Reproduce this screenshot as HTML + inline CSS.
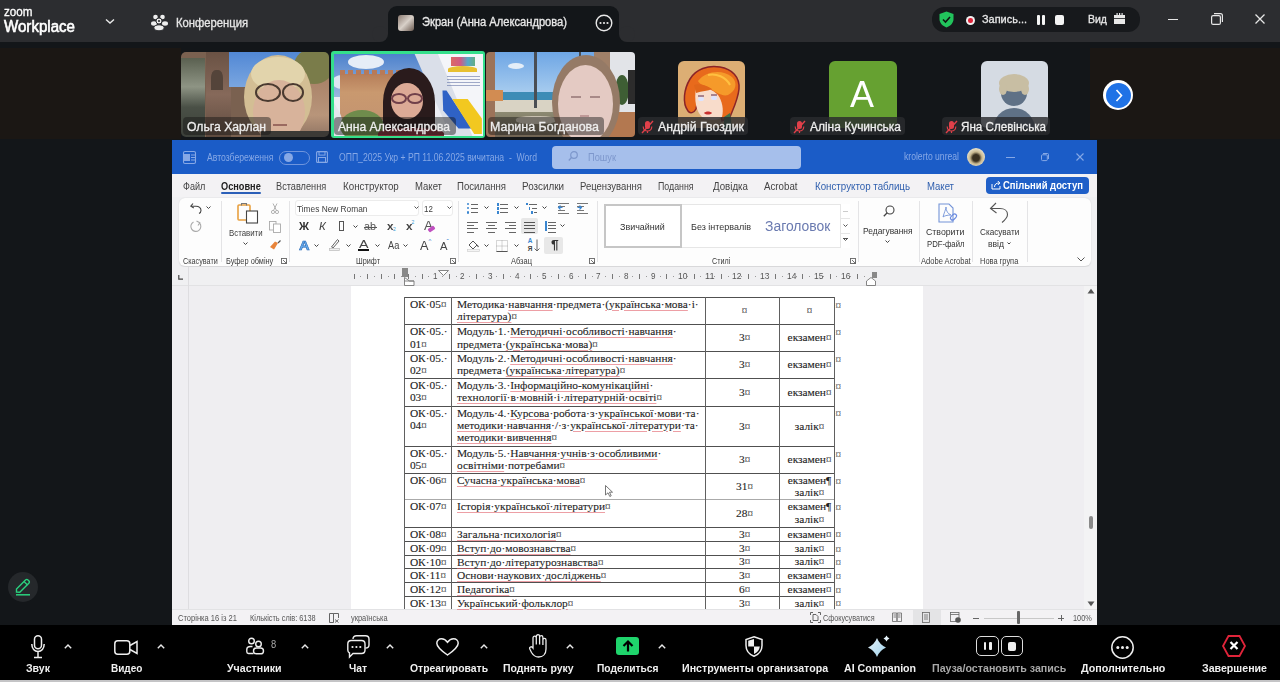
<!DOCTYPE html>
<html><head><meta charset="utf-8">
<style>
*{margin:0;padding:0;box-sizing:border-box}
html,body{width:1280px;height:682px;overflow:hidden;background:#131619;font-family:"Liberation Sans",sans-serif;position:relative}
.a{position:absolute}
.t{position:absolute;white-space:nowrap;line-height:1;transform-origin:0 0}
svg{position:absolute;overflow:visible}
u{text-decoration:underline;text-decoration-color:rgba(225,95,105,.6);text-underline-offset:1.8px;text-decoration-thickness:1px}
.cm{font-size:0.95em}
</style></head><body>
<!-- TOP BAR -->
<div class="a" style="left:0;top:0;width:1280px;height:42px;background:#2c2d30"></div>
<div class="t" style="left:4px;top:5.9px;font-size:12.5px;color:#fff;-webkit-text-stroke:0.3px #fff;transform:scaleX(0.9320)">zoom</div>
<div class="t" style="left:4px;top:18.5px;font-size:15.8px;color:#fff;-webkit-text-stroke:0.6px #fff;transform:scaleX(0.9550)">Workplace</div>
<svg style="left:105px;top:18px" width="10" height="7" viewBox="0 0 10 7"><path d="M1 1.5 L5 5 L9 1.5" stroke="#e8e8e8" stroke-width="1.4" fill="none"/></svg>
<svg style="left:151px;top:14px" width="17" height="17" viewBox="0 0 17 17"><circle cx="4.5" cy="3" r="2.3" fill="#eee"/><circle cx="11.5" cy="3" r="2.3" fill="#eee"/><ellipse cx="3" cy="9.5" rx="3" ry="2.2" fill="#eee"/><ellipse cx="14" cy="9.5" rx="3" ry="2.2" fill="#eee"/><circle cx="8" cy="7" r="3" fill="#eee" stroke="#2c2d30" stroke-width="1"/><circle cx="8" cy="7" r="1.1" fill="#2c2d30"/><ellipse cx="8" cy="13.8" rx="5.2" ry="3" fill="#eee" stroke="#2c2d30" stroke-width="1"/></svg>
<div class="t" style="left:176px;top:16px;font-size:13px;color:#e6e6e6;-webkit-text-stroke:0.35px #e6e6e6;transform:scaleX(0.8644)">Конференция</div>
<!-- share tab -->
<div class="a" style="left:388px;top:6px;width:231px;height:36px;background:#131619;border-radius:9px 9px 0 0"></div>
<div class="a" style="left:380px;top:34px;width:8px;height:8px;background:#131619"></div>
<div class="a" style="left:372px;top:26px;width:16px;height:16px;border-radius:50%;background:#2c2d30"></div>
<div class="a" style="left:619px;top:34px;width:8px;height:8px;background:#131619"></div>
<div class="a" style="left:619px;top:26px;width:16px;height:16px;border-radius:50%;background:#2c2d30"></div>
<div class="a" style="left:398px;top:15px;width:16px;height:16px;border-radius:3px;background:linear-gradient(135deg,#8a7a70,#d8d0c8 50%,#6a5a50)"></div>
<div class="t" style="left:422px;top:16px;font-size:12.5px;color:#e8e8e8;-webkit-text-stroke:0.35px #e8e8e8;transform:scaleX(0.8919)">Экран (Анна Александрова)</div>
<svg style="left:595px;top:14px" width="18" height="18" viewBox="0 0 18 18"><circle cx="9" cy="9" r="7.8" stroke="#e8e8e8" stroke-width="1.4" fill="none"/><circle cx="5.5" cy="9" r="1.1" fill="#e8e8e8"/><circle cx="9" cy="9" r="1.1" fill="#e8e8e8"/><circle cx="12.5" cy="9" r="1.1" fill="#e8e8e8"/></svg>
<!-- right pill -->
<div class="a" style="left:932px;top:7px;width:208px;height:25px;background:#17191c;border-radius:12px"></div>
<svg style="left:938px;top:11px" width="17" height="17" viewBox="0 0 17 17"><path d="M8.5 0.5 L15.5 3 V8 C15.5 12 12.5 15 8.5 16.5 C4.5 15 1.5 12 1.5 8 V3 Z" fill="#22c35c"/><path d="M5 8.5 L7.5 11 L12 6" stroke="#111" stroke-width="1.6" fill="none"/></svg>
<div class="a" style="left:965.5px;top:15.5px;width:9px;height:9px;border-radius:50%;background:#f2f2f2"></div>
<div class="a" style="left:968px;top:18px;width:4.5px;height:4.5px;border-radius:50%;background:#e0243a"></div>
<div class="t" style="left:982px;top:14px;font-size:11.5px;color:#e8e8e8;-webkit-text-stroke:0.3px #e8e8e8;transform:scaleX(0.9508)">Запись...</div>
<div class="a" style="left:1036.5px;top:15px;width:3px;height:10px;background:#f4f4f4;border-radius:1px"></div>
<div class="a" style="left:1041.5px;top:15px;width:3px;height:10px;background:#f4f4f4;border-radius:1px"></div>
<div class="a" style="left:1055px;top:15px;width:9px;height:9.5px;background:#f4f4f4;border-radius:2px"></div>
<div class="t" style="left:1088px;top:14px;font-size:11.5px;color:#e8e8e8;-webkit-text-stroke:0.3px #e8e8e8;transform:scaleX(0.9129)">Вид</div>
<svg style="left:1114px;top:13px" width="11" height="11" viewBox="0 0 11 11"><rect x="0" y="2" width="11" height="9" fill="#e8e8e8"/><rect x="2.5" y="0" width="1.2" height="2" fill="#e8e8e8"/><rect x="5" y="0" width="1.2" height="2" fill="#e8e8e8"/><rect x="7.5" y="0" width="1.2" height="2" fill="#e8e8e8"/><rect x="0" y="5" width="11" height="0.8" fill="#17191c"/></svg>
<div class="a" style="left:1168px;top:19px;width:10px;height:1.2px;background:#e6e6e6"></div>
<svg style="left:1211px;top:13px" width="12" height="12" viewBox="0 0 12 12"><rect x="0.6" y="2.6" width="8.8" height="8.8" rx="1.5" stroke="#e6e6e6" stroke-width="1.2" fill="none"/><path d="M3 0.6 H9.5 A1.9 1.9 0 0 1 11.4 2.5 V9" stroke="#e6e6e6" stroke-width="1.2" fill="none"/></svg>
<svg style="left:1255px;top:14px" width="10" height="10" viewBox="0 0 10 10"><path d="M0.5 0.5 L9.5 9.5 M9.5 0.5 L0.5 9.5" stroke="#e6e6e6" stroke-width="1.3"/></svg>

<!-- STRIP -->
<div class="a" style="left:0;top:48px;width:181px;height:91px;background:#1b1714"></div>
<div class="a" style="left:1090px;top:48px;width:190px;height:91px;background:#1b1714"></div>

<div class="a" style="left:181px;top:52px;width:148px;height:85px;overflow:hidden;border-radius:5px;"><div class="a" style="left:0;top:0;width:148px;height:85px;filter:blur(0.6px)"><div class="a" style="left:-2px;top:-2px;width:152px;height:90px;background:#7a6150;"></div><div class="a" style="left:25px;top:0px;width:25px;height:85px;background:linear-gradient(180deg,#6a5244,#86695a 50%,#5e4a3e);"></div><div class="a" style="left:30px;top:18px;width:12px;height:20px;background:#54443a;border-radius:40% 40% 0 0;"></div><div class="a" style="left:-2px;top:6px;width:26px;height:82px;background:linear-gradient(180deg,#5a6050,#8e9484 35%,#4a5046 60%,#3a3e38);"></div><div class="a" style="left:48px;top:-2px;width:78px;height:37px;background:linear-gradient(180deg,#4f86d4,#7aa6e0);"></div><div class="a" style="left:104px;top:26px;width:46px;height:62px;background:linear-gradient(180deg,#a98268,#b8957a 60%,#8a7060);"></div><div class="a" style="left:120px;top:38px;width:10px;height:12px;background:#7a6a60;"></div><div class="a" style="left:113px;top:-4px;width:40px;height:36px;background:#7a7c4a;border-radius:50%;"></div><div class="a" style="left:63px;top:3px;width:68px;height:84px;background:#d3be94;border-radius:50%;"></div><div class="a" style="left:70px;top:5px;width:54px;height:34px;background:#e2d4ac;border-radius:50%;"></div><div class="a" style="left:72px;top:28px;width:52px;height:64px;background:#d8b39b;border-radius:50%;"></div><div class="a" style="left:74px;top:30.5px;width:26px;height:19.0px;background:transparent;border-radius:50%;border:2.8px solid #4a3a30;"></div><div class="a" style="left:101px;top:30.5px;width:22px;height:19.0px;background:transparent;border-radius:50%;border:2.8px solid #4a3a30;"></div><div class="a" style="left:92px;top:72px;width:14px;height:2px;background:#9a6a60;"></div><div class="a" style="left:80px;top:79px;width:70px;height:8px;background:#3c3a36;"></div></div></div>
<div class="a" style="left:331px;top:51px;width:154px;height:87px;background:#34df8b;border-radius:3px;"></div>
<div class="a" style="left:333.5px;top:53.5px;width:149px;height:82px;overflow:hidden;"><div class="a" style="left:0;top:0;width:149px;height:82px;filter:blur(0.5px)"><div class="a" style="left:-2px;top:-2px;width:153px;height:88px;background:#eceef4;"></div><div class="a" style="left:-2px;top:-2px;width:95px;height:45px;background:linear-gradient(180deg,#4a7fcc,#9bb8de);"></div><div class="a" style="left:14px;top:1px;width:36px;height:14px;background:#e6edf7;border-radius:50%;"></div><div class="a" style="left:-2px;top:21px;width:20px;height:14px;background:#dfe6f2;border-radius:50%;"></div><div class="a" style="left:6px;top:20px;width:72px;height:46px;background:linear-gradient(180deg,#b67e5a,#c9996f 40%,#c49470);"></div><div class="a" style="left:6px;top:16px;width:72px;height:5px;background:repeating-linear-gradient(90deg,#b87a58 0 5px,transparent 5px 8px);"></div><div class="a" style="left:-2px;top:45px;width:20px;height:45px;background:#e4e6ee;clip-path:polygon(0 0,40% 30%,100% 100%,0 100%);"></div><div class="a" style="left:6px;top:56px;width:44px;height:32px;background:#6f8c4c;border-radius:50%;"></div><div class="a" style="left:80px;top:-2px;width:72px;height:90px;background:#dadfe9;clip-path:polygon(0 0,100% 0,100% 100%,55% 100%);"></div><div class="a" style="left:98px;top:-2px;width:54px;height:90px;background:#f4f5f9;clip-path:polygon(10% 0,100% 0,100% 100%,80% 100%);"></div><div class="a" style="left:100px;top:30px;width:52px;height:55px;background:#2f62c6;clip-path:polygon(9px 7px,13px 7px,38px 45px,25px 45px,9.7px 27px);"></div><div class="a" style="left:100px;top:30px;width:52px;height:55px;background:#f2c820;clip-path:polygon(18.8px 15.5px,34.2px 15.5px,48.4px 34.9px,48.4px 50.4px,40.7px 50.4px);"></div><div class="a" style="left:117px;top:3px;width:24px;height:9px;background:linear-gradient(90deg,#d8504a,#c84070 40%,#3a9ac0 70%,#4aa070);opacity:.85;"></div><div class="a" style="left:114px;top:12px;width:29px;height:6px;background:#e8c030;border-radius:50% 50% 0 0;"></div><div class="a" style="left:113px;top:22px;width:33px;height:12px;background:repeating-linear-gradient(180deg,#5a6aa0 0 1px,transparent 1px 3px);opacity:.55;"></div><div class="a" style="left:49px;top:14px;width:52px;height:68px;background:#2a1b1c;border-radius:50%;"></div><div class="a" style="left:49px;top:48px;width:52px;height:40px;background:#2a1b1c;"></div><div class="a" style="left:57px;top:29px;width:32px;height:36px;background:#dcaa96;border-radius:50%;"></div><div class="a" style="left:57px;top:39.5px;width:16px;height:11.0px;background:transparent;border-radius:50%;border:2px solid #70404a;"></div><div class="a" style="left:73px;top:39.5px;width:16px;height:11.0px;background:transparent;border-radius:50%;border:2px solid #70404a;"></div><div class="a" style="left:44px;top:74px;width:66px;height:14px;background:#7a2a34;border-radius:40% 40% 0 0;"></div></div></div>
<div class="a" style="left:486px;top:52px;width:149px;height:85px;overflow:hidden;border-radius:4px;"><div class="a" style="left:0;top:0;width:149px;height:85px;filter:blur(0.6px)"><div class="a" style="left:-2px;top:-2px;width:153px;height:89px;background:#d6d4cc;"></div><div class="a" style="left:9px;top:-2px;width:108px;height:44px;background:linear-gradient(180deg,#6ba4e4,#a9cdef);"></div><div class="a" style="left:22px;top:11px;width:16px;height:6px;background:#e4eef8;border-radius:50%;"></div><div class="a" style="left:9px;top:40px;width:108px;height:8px;background:#3d8cb6;"></div><div class="a" style="left:9px;top:48px;width:108px;height:14px;background:#d9d3c4;"></div><div class="a" style="left:-2px;top:60px;width:153px;height:27px;background:linear-gradient(180deg,#8c8a72,#6e6050);"></div><div class="a" style="left:30px;top:64px;width:40px;height:8px;background:#c8c0b0;border-radius:40%;"></div><div class="a" style="left:-2px;top:-2px;width:11px;height:89px;background:#9c7359;"></div><div class="a" style="left:-2px;top:38px;width:19px;height:11px;background:#d28c52;"></div><div class="a" style="left:48px;top:-2px;width:3px;height:58px;background:#4a4e54;"></div><div class="a" style="left:93px;top:-2px;width:2px;height:10px;background:#4a4e54;"></div><div class="a" style="left:108px;top:-2px;width:18px;height:89px;background:#a08068;"></div><div class="a" style="left:124px;top:-2px;width:27px;height:89px;background:#e2e4e8;"></div><div class="a" style="left:129px;top:23px;width:14px;height:30px;background:#3e5e34;border-radius:50%;"></div><div class="a" style="left:142px;top:18px;width:7px;height:34px;background:#2c2c2c;"></div><div class="a" style="left:112px;top:60px;width:39px;height:27px;background:#b37850;"></div><div class="a" style="left:66px;top:3px;width:68px;height:94px;background:#957a66;border-radius:50%;"></div><div class="a" style="left:71.5px;top:13px;width:55.0px;height:78px;background:#e4cac3;border-radius:50%;"></div><div class="a" style="left:85px;top:44px;width:10px;height:2px;background:#a88a88;"></div><div class="a" style="left:104px;top:44px;width:10px;height:2px;background:#a88a88;"></div><div class="a" style="left:94px;top:63px;width:9px;height:2px;background:#c09a98;"></div></div></div>
<div class="a" style="left:183px;top:117px;width:88px;height:18px;background:rgba(20,20,20,.45);border-radius:4px;"></div>
<div class="t" style="left:187px;top:120.64px;font-size:12px;color:#eee;-webkit-text-stroke:0.3px #eee;transform:scaleX(1.0151)">Ольга Харлан</div>
<div class="a" style="left:334px;top:117px;width:122px;height:18px;background:rgba(20,20,20,.45);border-radius:4px;"></div>
<div class="t" style="left:338px;top:120.64px;font-size:12px;color:#eee;-webkit-text-stroke:0.3px #eee;transform:scaleX(1.0099)">Анна Александрова</div>
<div class="a" style="left:488px;top:117px;width:116px;height:18px;background:rgba(20,20,20,.45);border-radius:4px;"></div>
<div class="t" style="left:490px;top:120.64px;font-size:12px;color:#eee;-webkit-text-stroke:0.3px #eee;transform:scaleX(1.0372)">Марина Богданова</div>
<div class="a" style="left:678px;top:61px;width:67px;height:67px;border-radius:6px;overflow:hidden;background:#dcae74"><svg style="left:0;top:0;filter:blur(0.3px)" width="67" height="67" viewBox="0 0 67 67"><path d="M10 50 C4 42 6 28 12 18 C18 8 30 4 42 6 C54 8 62 16 61 28 C60 38 56 46 52 56 L44 60 L40 40 L22 30 L18 48 C16 52 12 53 10 50 Z" fill="#e86a1c" stroke="#8a2428" stroke-width="1.5"/><path d="M20 20 C28 10 44 8 54 16 C60 22 58 30 50 34 C44 36 36 30 30 26 C26 24 22 24 20 20 Z" fill="#f59a2a"/><path d="M30 14 C38 12 48 16 52 24" stroke="#ffc040" stroke-width="2" fill="none"/><path d="M18 26 C24 24 34 28 40 34 C44 40 46 48 44 56 C40 60 30 60 24 56 C18 50 16 40 18 26 Z" fill="#f8dccb"/><path d="M16 24 C20 22 28 24 34 28 C30 30 24 30 18 32 Z" fill="#e0661a"/><ellipse cx="23" cy="38" rx="3" ry="2" fill="#dde4ff"/><ellipse cx="36" cy="37" rx="3" ry="2" fill="#dde4ff"/><path d="M20 35 H26 M33 34 H39" stroke="#5a2a50" stroke-width="1.2"/><path d="M26 52 C28 50 32 50 34 52 C32 54 28 54 26 52 Z" fill="#c83030"/><path d="M46 56 L52 52 L54 67 L46 67 Z" fill="#3e7048"/></svg></div>
<div class="a" style="left:829px;top:61px;width:68px;height:67px;background:#66a131;border-radius:6px;"></div>
<div class="t" style="left:849.5px;top:77.21px;font-size:36px;color:#fff;transform:scaleX(0.9993)">A</div>
<div class="a" style="left:981px;top:61px;width:67px;height:67px;overflow:hidden;border-radius:6px;"><div class="a" style="left:0;top:0;width:67px;height:67px;filter:blur(0.4px)"><div class="a" style="left:-2px;top:-2px;width:71px;height:71px;background:#d5dbe3;"></div><div class="a" style="left:12px;top:47px;width:42px;height:42px;background:#5f7186;border-radius:50%;"></div><div class="a" style="left:20px;top:19px;width:26px;height:26px;background:#5f7186;border-radius:50%;"></div><div class="a" style="left:18px;top:13px;width:30px;height:18px;background:#c8bea3;border-radius:50%;"></div><div class="a" style="left:18px;top:22px;width:8px;height:12px;background:#c8bea3;border-radius:50%;"></div><div class="a" style="left:40px;top:22px;width:8px;height:12px;background:#c8bea3;border-radius:50%;"></div></div></div>
<div class="a" style="left:638px;top:117px;width:110px;height:18px;background:rgba(42,43,46,.82);border-radius:4px;"></div>
<svg style="left:640.5px;top:119.5px" width="13" height="14" viewBox="0 0 13 14"><rect x="4" y="1" width="5" height="8" rx="2.5" fill="#e0404a"/><path d="M2.2 6.5 C2.2 9.2 4.2 11 6.5 11 C8.8 11 10.8 9.2 10.8 6.5 M6.5 11 V13" stroke="#e0404a" stroke-width="1.2" fill="none"/><path d="M1 13 L12 1" stroke="#e0404a" stroke-width="1.4"/></svg>
<div class="t" style="left:658.4px;top:120.64px;font-size:12px;color:#eee;-webkit-text-stroke:0.3px #eee;transform:scaleX(1.0261)">Андрій Гвоздик</div>
<div class="a" style="left:790px;top:117px;width:115px;height:18px;background:rgba(42,43,46,.82);border-radius:4px;"></div>
<svg style="left:792.5px;top:119.5px" width="13" height="14" viewBox="0 0 13 14"><rect x="4" y="1" width="5" height="8" rx="2.5" fill="#e0404a"/><path d="M2.2 6.5 C2.2 9.2 4.2 11 6.5 11 C8.8 11 10.8 9.2 10.8 6.5 M6.5 11 V13" stroke="#e0404a" stroke-width="1.2" fill="none"/><path d="M1 13 L12 1" stroke="#e0404a" stroke-width="1.4"/></svg>
<div class="t" style="left:809.7px;top:120.64px;font-size:12px;color:#eee;-webkit-text-stroke:0.3px #eee;transform:scaleX(0.9964)">Аліна Кучинська</div>
<div class="a" style="left:942px;top:117px;width:108px;height:18px;background:rgba(42,43,46,.82);border-radius:4px;"></div>
<svg style="left:944.5px;top:119.5px" width="13" height="14" viewBox="0 0 13 14"><rect x="4" y="1" width="5" height="8" rx="2.5" fill="#e0404a"/><path d="M2.2 6.5 C2.2 9.2 4.2 11 6.5 11 C8.8 11 10.8 9.2 10.8 6.5 M6.5 11 V13" stroke="#e0404a" stroke-width="1.2" fill="none"/><path d="M1 13 L12 1" stroke="#e0404a" stroke-width="1.4"/></svg>
<div class="t" style="left:961px;top:120.64px;font-size:12px;color:#eee;-webkit-text-stroke:0.3px #eee;transform:scaleX(0.9687)">Яна Слевінська</div>
<div class="a" style="left:1103px;top:80px;width:30px;height:30px;background:#fff;border-radius:50%;"></div>
<div class="a" style="left:1105.5px;top:82.5px;width:25px;height:25px;background:#1f72e6;border-radius:50%;"></div>
<svg style="left:1114.5px;top:89px" width="8" height="13" viewBox="0 0 8 13"><path d="M1.5 1 L6.5 6.5 L1.5 12" stroke="#fff" stroke-width="1.6" fill="none"/></svg>
<!-- WORD -->
<div class="a" style="left:172px;top:140px;width:925px;height:485px;background:#f0f0f2;"></div>
<div class="a" style="left:172px;top:140px;width:925px;height:34px;background:#1b5cc7;"></div>
<svg style="left:183px;top:151px" width="13" height="13" viewBox="0 0 13 13"><rect x="0.5" y="0.5" width="12" height="12" rx="1.5" fill="none" stroke="#86a8e6" stroke-width="1.1"/><rect x="0.5" y="3" width="6.5" height="7" fill="#86a8e6"/><path d="M8 4 H12 M8 6.5 H12 M8 9 H12" stroke="#86a8e6" stroke-width="1"/></svg>
<div class="t" style="left:207px;top:152.92px;font-size:10px;color:#86a8e6;transform:scaleX(0.8629)">Автозбереження</div>
<div class="a" style="left:278.5px;top:150.5px;width:31px;height:14px;border-radius:7px;border:1.2px solid #6f95dd"></div>
<div class="a" style="left:284px;top:153px;width:9px;height:9px;border-radius:50%;background:#86a8e6"></div>
<svg style="left:316px;top:151px" width="12" height="12" viewBox="0 0 12 12"><rect x="0.6" y="0.6" width="10.8" height="10.8" rx="1" fill="none" stroke="#86a8e6" stroke-width="1.1"/><rect x="3" y="0.6" width="6" height="3.5" fill="none" stroke="#86a8e6" stroke-width="1"/><rect x="2.5" y="6.5" width="7" height="4.9" fill="none" stroke="#86a8e6" stroke-width="1"/></svg>
<div class="t" style="left:339px;top:152.92px;font-size:10px;color:#86a8e6;transform:scaleX(0.8621)">ОПП_2025 Укр + РП 11.06.2025 вичитана&nbsp; - &nbsp;Word</div>
<div class="a" style="left:552px;top:146px;width:249px;height:22.5px;background:#a6bfeb;border-radius:4px;"></div>
<svg style="left:568px;top:151px" width="10" height="11" viewBox="0 0 10 11"><circle cx="6" cy="4" r="3.3" fill="none" stroke="#7d97cc" stroke-width="1.2"/><path d="M3.7 6.3 L0.8 9.5" stroke="#7d97cc" stroke-width="1.3"/></svg>
<div class="t" style="left:587.5px;top:152.62px;font-size:10px;color:#7d97cc;transform:scaleX(0.9285)">Пошук</div>
<div class="t" style="left:904px;top:152.12px;font-size:10px;color:#86a8e6;transform:scaleX(0.8604)">krolerto unreal</div>
<div class="a" style="left:967px;top:148px;width:18px;height:18px;border-radius:50%;background:radial-gradient(circle at 50% 55%,#3a3020 0 25%,#c8b890 45%,#e8e0c8 70%,#a89878)"></div>
<div class="a" style="left:1006px;top:156.5px;width:9px;height:1px;background:#86a8e6;"></div>
<svg style="left:1041px;top:153px" width="8" height="8" viewBox="0 0 8 8"><rect x="0.5" y="1.8" width="5.8" height="5.8" rx="1" fill="none" stroke="#86a8e6" stroke-width="1"/><path d="M2 0.5 H6.5 A1 1 0 0 1 7.5 1.5 V6" stroke="#86a8e6" stroke-width="1" fill="none"/></svg>
<svg style="left:1076px;top:153px" width="8" height="8" viewBox="0 0 8 8"><path d="M0.5 0.5 L7.5 7.5 M7.5 0.5 L0.5 7.5" stroke="#86a8e6" stroke-width="1.1"/></svg>
<div class="a" style="left:172px;top:174px;width:925px;height:23px;background:#f3f2f4;"></div>
<div class="t" style="left:183px;top:181.12px;font-size:10.8px;color:#444;transform:scaleX(0.8400)">Файл</div>
<div class="t" style="left:221px;top:181.12px;font-size:10.8px;color:#222;font-weight:bold;transform:scaleX(0.8525)">Основне</div>
<div class="t" style="left:276px;top:181.12px;font-size:10.8px;color:#444;transform:scaleX(0.8508)">Вставлення</div>
<div class="t" style="left:343px;top:181.12px;font-size:10.8px;color:#444;transform:scaleX(0.9064)">Конструктор</div>
<div class="t" style="left:414.5px;top:181.12px;font-size:10.8px;color:#444;transform:scaleX(0.8834)">Макет</div>
<div class="t" style="left:457.4px;top:181.12px;font-size:10.8px;color:#444;transform:scaleX(0.8864)">Посилання</div>
<div class="t" style="left:522px;top:181.12px;font-size:10.8px;color:#444;transform:scaleX(0.9143)">Розсилки</div>
<div class="t" style="left:580px;top:181.12px;font-size:10.8px;color:#444;transform:scaleX(0.8808)">Рецензування</div>
<div class="t" style="left:658px;top:181.12px;font-size:10.8px;color:#444;transform:scaleX(0.8140)">Подання</div>
<div class="t" style="left:713px;top:181.12px;font-size:10.8px;color:#444;transform:scaleX(0.9010)">Довідка</div>
<div class="t" style="left:764px;top:181.12px;font-size:10.8px;color:#444;transform:scaleX(0.9001)">Acrobat</div>
<div class="t" style="left:815px;top:181.12px;font-size:10.8px;color:#2f5fae;transform:scaleX(0.9027)">Конструктор таблиць</div>
<div class="t" style="left:927px;top:181.12px;font-size:10.8px;color:#2f5fae;transform:scaleX(0.8834)">Макет</div>
<div class="a" style="left:221px;top:191.8px;width:40px;height:2px;background:#2b5fb8;border-radius:1px;"></div>
<div class="a" style="left:986px;top:177px;width:103px;height:16.5px;background:#1f5fc8;border-radius:4px;"></div>
<svg style="left:991px;top:180px" width="10" height="10" viewBox="0 0 10 10"><path d="M1 4 V9 H9 V6" stroke="#fff" stroke-width="1" fill="none"/><path d="M3.5 7 C3.5 4 5.5 3 8.5 3 M6.8 1 L8.8 3 L6.8 5" stroke="#fff" stroke-width="1" fill="none"/></svg>
<div class="t" style="left:1003px;top:180.17px;font-size:10.5px;color:#fff;font-weight:bold;transform:scaleX(0.9038)">Спільний доступ</div>
<div class="a" style="left:178.5px;top:197.5px;width:912px;height:68.5px;background:#fdfdfd;border-radius:6px;box-shadow:0 0.5px 1.5px rgba(0,0,0,.12);"></div>
<div class="a" style="left:220.5px;top:201px;width:1px;height:61px;background:#e4e4e6;"></div>
<div class="a" style="left:289.3px;top:201px;width:1px;height:61px;background:#e4e4e6;"></div>
<div class="a" style="left:457.5px;top:201px;width:1px;height:61px;background:#e4e4e6;"></div>
<div class="a" style="left:597px;top:201px;width:1px;height:61px;background:#e4e4e6;"></div>
<div class="a" style="left:857.8px;top:201px;width:1px;height:61px;background:#e4e4e6;"></div>
<div class="a" style="left:918.8px;top:201px;width:1px;height:61px;background:#e4e4e6;"></div>
<div class="a" style="left:972.2px;top:201px;width:1px;height:61px;background:#e4e4e6;"></div>
<div class="a" style="left:1026.6px;top:201px;width:1px;height:61px;background:#e4e4e6;"></div>
<div class="t" style="left:183px;top:257.10px;font-size:9px;color:#3c3c3c;transform:scaleX(0.8040)">Скасувати</div>
<div class="t" style="left:225.5px;top:257.10px;font-size:9px;color:#3c3c3c;transform:scaleX(0.8204)">Буфер обміну</div>
<div class="t" style="left:355.7px;top:256.50px;font-size:9px;color:#3c3c3c;transform:scaleX(0.8101)">Шрифт</div>
<div class="t" style="left:511.3px;top:256.80px;font-size:9px;color:#3c3c3c;transform:scaleX(0.8317)">Абзац</div>
<div class="t" style="left:711.7px;top:256.60px;font-size:9px;color:#3c3c3c;transform:scaleX(0.7989)">Стилі</div>
<div class="t" style="left:920.6px;top:257.20px;font-size:9px;color:#3c3c3c;transform:scaleX(0.8417)">Adobe Acrobat</div>
<div class="t" style="left:979.7px;top:257.20px;font-size:9px;color:#3c3c3c;transform:scaleX(0.8278)">Нова група</div>
<svg style="left:281px;top:258px" width="6" height="6" viewBox="0 0 6 6"><rect x="0.5" y="0.5" width="5" height="5" fill="none" stroke="#666" stroke-width="0.9"/><path d="M2 2 L5.5 5.5 M3 5.5 H5.5 V3" stroke="#666" stroke-width="0.9" fill="none"/></svg>
<svg style="left:449.5px;top:258px" width="6" height="6" viewBox="0 0 6 6"><rect x="0.5" y="0.5" width="5" height="5" fill="none" stroke="#666" stroke-width="0.9"/><path d="M2 2 L5.5 5.5 M3 5.5 H5.5 V3" stroke="#666" stroke-width="0.9" fill="none"/></svg>
<svg style="left:589px;top:258px" width="6" height="6" viewBox="0 0 6 6"><rect x="0.5" y="0.5" width="5" height="5" fill="none" stroke="#666" stroke-width="0.9"/><path d="M2 2 L5.5 5.5 M3 5.5 H5.5 V3" stroke="#666" stroke-width="0.9" fill="none"/></svg>
<svg style="left:849.5px;top:258px" width="6" height="6" viewBox="0 0 6 6"><rect x="0.5" y="0.5" width="5" height="5" fill="none" stroke="#666" stroke-width="0.9"/><path d="M2 2 L5.5 5.5 M3 5.5 H5.5 V3" stroke="#666" stroke-width="0.9" fill="none"/></svg>
<svg style="left:189.5px;top:202px" width="12" height="12" viewBox="0 0 12 12"><path d="M3 1.5 L0.8 4.2 L3.8 6" stroke="#444" stroke-width="1.1" fill="none"/><path d="M1 4.2 H6 C9 4.2 11 6 11 8.5 C11 9.8 10 11 9 11.5" stroke="#444" stroke-width="1.1" fill="none"/></svg>
<svg style="left:205.5px;top:205.75px" width="5" height="3.5" viewBox="0 0 5 3.5"><path d="M0.5 0.5 L2.5 2.5 L4.5 0.5" stroke="#444" stroke-width="1" fill="none"/></svg>
<svg style="left:189.5px;top:220px" width="12" height="12" viewBox="0 0 12 12"><path d="M9.5 3 A5 5 0 1 1 3.5 2" stroke="#aaa" stroke-width="1.1" fill="none"/><path d="M6.5 1 L9.8 2.8 L8 5.5" stroke="#aaa" stroke-width="1.1" fill="none"/></svg>
<svg style="left:237px;top:201px" width="22" height="23" viewBox="0 0 22 23"><rect x="1" y="4" width="12" height="15" rx="1" fill="none" stroke="#e8a040" stroke-width="1.6"/><path d="M4.5 4.5 V2.5 H9.5 V4.5" stroke="#777" stroke-width="1.1" fill="none"/><rect x="9.5" y="10" width="11" height="12" fill="#fff" stroke="#444" stroke-width="1.1"/></svg>
<div class="t" style="left:228.8px;top:228.36px;font-size:9.5px;color:#404040;transform:scaleX(0.8268)">Вставити</div>
<svg style="left:242.5px;top:241.75px" width="5" height="3.5" viewBox="0 0 5 3.5"><path d="M0.5 0.5 L2.5 2.5 L4.5 0.5" stroke="#444" stroke-width="1" fill="none"/></svg>
<svg style="left:271px;top:203px" width="8" height="11" viewBox="0 0 8 11"><circle cx="2" cy="9" r="1.6" fill="none" stroke="#aaa" stroke-width="0.9"/><circle cx="6" cy="9" r="1.6" fill="none" stroke="#aaa" stroke-width="0.9"/><path d="M2.5 7.5 L6 0.5 M5.5 7.5 L2 0.5" stroke="#aaa" stroke-width="0.9"/></svg>
<svg style="left:269px;top:221px" width="12" height="12" viewBox="0 0 12 12"><rect x="0.5" y="0.5" width="6.5" height="8.5" fill="none" stroke="#aaa" stroke-width="0.9"/><rect x="4.5" y="3" width="7" height="8.5" fill="#fff" stroke="#aaa" stroke-width="0.9"/></svg>
<svg style="left:269px;top:239.5px" width="12" height="11" viewBox="0 0 12 11"><path d="M1 7 L5 9.5 L9 3 L6 1.5 Z" fill="#e8843a"/><path d="M9 3 L11.5 0.5" stroke="#555" stroke-width="1.2"/></svg>
<div class="a" style="left:295.3px;top:199.6px;width:124px;height:16.6px;background:#fff;border:1px solid #ececec;border-radius:3px;"></div>
<div class="t" style="left:297.3px;top:203.66px;font-size:9.5px;color:#404040;transform:scaleX(0.8754)">Times New Roman</div>
<svg style="left:413.5px;top:206.25px" width="5" height="3.5" viewBox="0 0 5 3.5"><path d="M0.5 0.5 L2.5 2.5 L4.5 0.5" stroke="#555" stroke-width="1" fill="none"/></svg>
<div class="a" style="left:422px;top:199.6px;width:31px;height:16.6px;background:#fff;border:1px solid #ececec;border-radius:3px;"></div>
<div class="t" style="left:424px;top:203.66px;font-size:9.5px;color:#404040;transform:scaleX(0.8319)">12</div>
<svg style="left:446.5px;top:206.25px" width="5" height="3.5" viewBox="0 0 5 3.5"><path d="M0.5 0.5 L2.5 2.5 L4.5 0.5" stroke="#555" stroke-width="1" fill="none"/></svg>
<div class="t" style="left:298.6px;top:221.07px;font-size:10.5px;color:#333;font-weight:bold;transform:scaleX(1.0526)">Ж</div>
<div class="t" style="left:319px;top:221.07px;font-size:10.5px;color:#444;font-style:italic;transform:scaleX(1.0962)">К</div>
<div class="a" style="left:338.5px;top:221px;width:5px;height:10px;background:none;border:1.1px solid #555;"></div>
<svg style="left:352.5px;top:224.75px" width="5" height="3.5" viewBox="0 0 5 3.5"><path d="M0.5 0.5 L2.5 2.5 L4.5 0.5" stroke="#444" stroke-width="1" fill="none"/></svg>
<div class="t" style="left:364.4px;top:221.92px;font-size:10px;color:#555;transform:scaleX(1.0787)">ab</div>
<div class="a" style="left:364px;top:226.5px;width:12.5px;height:1px;background:#555;"></div>
<div class="t" style="left:387px;top:221.07px;font-size:10.5px;color:#444;font-weight:bold;transform:scaleX(1.1123)">x</div>
<div class="t" style="left:393px;top:227.06px;font-size:5px;color:#3a9ad0;">2</div>
<div class="t" style="left:405.5px;top:221.07px;font-size:10.5px;color:#444;font-weight:bold;transform:scaleX(1.1123)">x</div>
<div class="t" style="left:411.5px;top:219.56px;font-size:5px;color:#3a9ad0;">2</div>
<div class="t" style="left:423.5px;top:220.14px;font-size:12px;color:#555;transform:scaleX(1.1228)">A</div>
<div class="a" style="left:428px;top:227px;width:7px;height:4px;background:#c050c0;transform:rotate(-35deg);border-radius:1px;"></div>
<div class="t" style="left:298.6px;top:239.15px;font-size:13px;color:#3a80d0;font-weight:bold;-webkit-text-stroke:0.6px #2a6ab8;color:#6ab0f0;transform:scaleX(1.1288)">A</div>
<svg style="left:313.5px;top:244.25px" width="5" height="3.5" viewBox="0 0 5 3.5"><path d="M0.5 0.5 L2.5 2.5 L4.5 0.5" stroke="#444" stroke-width="1" fill="none"/></svg>
<svg style="left:328.5px;top:238px" width="11" height="13" viewBox="0 0 11 13"><path d="M2.5 9 L8.5 1.5 L10 3 L4 10 Z" fill="none" stroke="#666" stroke-width="1"/><rect x="0.5" y="10.5" width="10" height="2" fill="#f0f0f0" stroke="#bbb" stroke-width="0.7"/></svg>
<svg style="left:345.5px;top:244.25px" width="5" height="3.5" viewBox="0 0 5 3.5"><path d="M0.5 0.5 L2.5 2.5 L4.5 0.5" stroke="#444" stroke-width="1" fill="none"/></svg>
<div class="t" style="left:358.5px;top:238.63px;font-size:11px;color:#444;transform:scaleX(1.2936)">A</div>
<div class="a" style="left:357.7px;top:249.2px;width:11.3px;height:2px;background:#111;"></div>
<svg style="left:374.5px;top:244.25px" width="5" height="3.5" viewBox="0 0 5 3.5"><path d="M0.5 0.5 L2.5 2.5 L4.5 0.5" stroke="#444" stroke-width="1" fill="none"/></svg>
<div class="t" style="left:387.6px;top:240.13px;font-size:11px;color:#444;transform:scaleX(0.8390)">Aa</div>
<svg style="left:402.5px;top:244.25px" width="5" height="3.5" viewBox="0 0 5 3.5"><path d="M0.5 0.5 L2.5 2.5 L4.5 0.5" stroke="#444" stroke-width="1" fill="none"/></svg>
<div class="t" style="left:420px;top:239.64px;font-size:12px;color:#444;transform:scaleX(1.0604)">A</div>
<div class="t" style="left:428.5px;top:238.07px;font-size:6px;color:#3a80d0;">^</div>
<div class="t" style="left:440px;top:240.87px;font-size:10.5px;color:#444;transform:scaleX(1.0690)">A</div>
<div class="t" style="left:446.5px;top:238.08px;font-size:7px;color:#3a80d0;">ˇ</div>
<div class="a" style="left:467px;top:203.0px;width:2.2px;height:2.2px;background:#3a86d0;border-radius:50%;"></div>
<div class="a" style="left:467px;top:207.2px;width:2.2px;height:2.2px;background:#3a86d0;border-radius:50%;"></div>
<div class="a" style="left:467px;top:211.4px;width:2.2px;height:2.2px;background:#3a86d0;border-radius:50%;"></div>
<div class="a" style="left:470.5px;top:203.5px;width:7.5px;height:1.2px;background:#666;"></div>
<div class="a" style="left:470.5px;top:207.7px;width:7.5px;height:1.2px;background:#666;"></div>
<div class="a" style="left:470.5px;top:211.9px;width:7.5px;height:1.2px;background:#666;"></div>
<svg style="left:484.1px;top:206.25px" width="5" height="3.5" viewBox="0 0 5 3.5"><path d="M0.5 0.5 L2.5 2.5 L4.5 0.5" stroke="#444" stroke-width="1" fill="none"/></svg>
<div class="a" style="left:497px;top:202.5px;width:1.6px;height:3px;background:#3a86d0;"></div>
<div class="a" style="left:497px;top:206.7px;width:1.6px;height:3px;background:#3a86d0;"></div>
<div class="a" style="left:497px;top:210.9px;width:1.6px;height:3px;background:#3a86d0;"></div>
<div class="a" style="left:500px;top:203.5px;width:7.5px;height:1.2px;background:#666;"></div>
<div class="a" style="left:500px;top:207.7px;width:7.5px;height:1.2px;background:#666;"></div>
<div class="a" style="left:500px;top:211.9px;width:7.5px;height:1.2px;background:#666;"></div>
<svg style="left:513.5px;top:206.25px" width="5" height="3.5" viewBox="0 0 5 3.5"><path d="M0.5 0.5 L2.5 2.5 L4.5 0.5" stroke="#444" stroke-width="1" fill="none"/></svg>
<div class="a" style="left:526px;top:202.5px;width:1.5px;height:2.5px;background:#3a86d0;"></div>
<div class="a" style="left:528.5px;top:207px;width:1.5px;height:2.5px;background:#3a86d0;"></div>
<div class="a" style="left:531px;top:211px;width:1.5px;height:2.5px;background:#3a86d0;"></div>
<div class="a" style="left:529px;top:203.5px;width:8px;height:1.2px;background:#666;"></div>
<div class="a" style="left:531.5px;top:207.8px;width:5.5px;height:1.2px;background:#666;"></div>
<div class="a" style="left:534px;top:212px;width:3px;height:1.2px;background:#666;"></div>
<svg style="left:541.5px;top:206.25px" width="5" height="3.5" viewBox="0 0 5 3.5"><path d="M0.5 0.5 L2.5 2.5 L4.5 0.5" stroke="#444" stroke-width="1" fill="none"/></svg>
<div class="a" style="left:558px;top:202.5px;width:11px;height:1.2px;background:#777;"></div>
<div class="a" style="left:558px;top:206.1px;width:6.5px;height:1.2px;background:#777;"></div>
<div class="a" style="left:558px;top:209.7px;width:6.5px;height:1.2px;background:#777;"></div>
<div class="a" style="left:558px;top:213.3px;width:11px;height:1.2px;background:#777;"></div>
<div class="a" style="left:577px;top:202.5px;width:11px;height:1.2px;background:#777;"></div>
<div class="a" style="left:577px;top:206.1px;width:6.5px;height:1.2px;background:#777;"></div>
<div class="a" style="left:577px;top:209.7px;width:6.5px;height:1.2px;background:#777;"></div>
<div class="a" style="left:577px;top:213.3px;width:11px;height:1.2px;background:#777;"></div>
<svg style="left:558px;top:204.5px" width="5" height="5" viewBox="0 0 5 5"><path d="M4.5 2.5 H0.5 M2.5 0.5 L0.5 2.5 L2.5 4.5" stroke="#3a86d0" stroke-width="1.1" fill="none"/></svg>
<svg style="left:577px;top:204.5px" width="5" height="5" viewBox="0 0 5 5"><path d="M0.5 2.5 H4.5 M2.5 0.5 L4.5 2.5 L2.5 4.5" stroke="#3a86d0" stroke-width="1.1" fill="none"/></svg>
<div class="a" style="left:521px;top:218px;width:16.6px;height:16.3px;background:#e8e8e8;border-radius:2px;"></div>
<div class="a" style="left:467.3px;top:221.5px;width:10.5px;height:1.2px;background:#666;"></div>
<div class="a" style="left:467.3px;top:224.9px;width:7px;height:1.2px;background:#666;"></div>
<div class="a" style="left:467.3px;top:228.3px;width:10.5px;height:1.2px;background:#666;"></div>
<div class="a" style="left:467.3px;top:231.7px;width:7px;height:1.2px;background:#666;"></div>
<div class="a" style="left:486.0px;top:221.5px;width:10.5px;height:1.2px;background:#666;"></div>
<div class="a" style="left:487.75px;top:224.9px;width:7px;height:1.2px;background:#666;"></div>
<div class="a" style="left:486.0px;top:228.3px;width:10.5px;height:1.2px;background:#666;"></div>
<div class="a" style="left:487.75px;top:231.7px;width:7px;height:1.2px;background:#666;"></div>
<div class="a" style="left:505.0px;top:221.5px;width:10.5px;height:1.2px;background:#666;"></div>
<div class="a" style="left:508.5px;top:224.9px;width:7px;height:1.2px;background:#666;"></div>
<div class="a" style="left:505.0px;top:228.3px;width:10.5px;height:1.2px;background:#666;"></div>
<div class="a" style="left:508.5px;top:231.7px;width:7px;height:1.2px;background:#666;"></div>
<div class="a" style="left:524.2px;top:221.5px;width:10.5px;height:1.2px;background:#555;"></div>
<div class="a" style="left:524.2px;top:224.9px;width:10.5px;height:1.2px;background:#555;"></div>
<div class="a" style="left:524.2px;top:228.3px;width:10.5px;height:1.2px;background:#555;"></div>
<div class="a" style="left:524.2px;top:231.7px;width:10.5px;height:1.2px;background:#555;"></div>
<div class="a" style="left:545px;top:221px;width:1.5px;height:10px;background:#3a86d0;"></div>
<div class="a" style="left:548px;top:221.5px;width:8px;height:1.2px;background:#666;"></div>
<div class="a" style="left:548px;top:224.9px;width:8px;height:1.2px;background:#666;"></div>
<div class="a" style="left:548px;top:228.3px;width:8px;height:1.2px;background:#666;"></div>
<div class="a" style="left:548px;top:231.7px;width:8px;height:1.2px;background:#666;"></div>
<svg style="left:559.8px;top:224.25px" width="5" height="3.5" viewBox="0 0 5 3.5"><path d="M0.5 0.5 L2.5 2.5 L4.5 0.5" stroke="#444" stroke-width="1" fill="none"/></svg>
<svg style="left:467px;top:239px" width="13" height="13" viewBox="0 0 13 13"><path d="M2 6 L6 2 L10 6 L6 10 Z" fill="none" stroke="#555" stroke-width="1"/><path d="M10 6 L11.5 8" stroke="#555" stroke-width="1.2"/><rect x="0.5" y="10.5" width="12" height="2" fill="#f4f4f4" stroke="#ccc" stroke-width="0.6"/></svg>
<svg style="left:484.1px;top:244.25px" width="5" height="3.5" viewBox="0 0 5 3.5"><path d="M0.5 0.5 L2.5 2.5 L4.5 0.5" stroke="#444" stroke-width="1" fill="none"/></svg>
<svg style="left:496px;top:239.5px" width="12" height="12" viewBox="0 0 12 12"><rect x="0.5" y="0.5" width="11" height="11" fill="none" stroke="#999" stroke-width="0.8" stroke-dasharray="1 1"/><path d="M6 0.5 V11.5 M0.5 6 H11.5" stroke="#999" stroke-width="0.8" stroke-dasharray="1 1"/><path d="M0.5 11.5 H11.5" stroke="#555" stroke-width="1"/></svg>
<svg style="left:513.5px;top:244.25px" width="5" height="3.5" viewBox="0 0 5 3.5"><path d="M0.5 0.5 L2.5 2.5 L4.5 0.5" stroke="#444" stroke-width="1" fill="none"/></svg>
<div class="t" style="left:527.7px;top:238.32px;font-size:6.5px;color:#3a86d0;font-weight:bold;">A</div>
<div class="t" style="left:527.7px;top:245.82px;font-size:6.5px;color:#444;font-weight:bold;">Я</div>
<svg style="left:534px;top:239px" width="6" height="13" viewBox="0 0 6 13"><path d="M3 0.5 V12 M0.5 9.5 L3 12 L5.5 9.5" stroke="#666" stroke-width="1" fill="none"/></svg>
<div class="a" style="left:543.5px;top:236.6px;width:19px;height:17px;background:#e8e8e8;border-radius:2px;"></div>
<div class="t" style="left:550.5px;top:239.14px;font-size:12px;color:#333;font-weight:bold;transform:scaleX(1.1514)">¶</div>
<div class="a" style="left:604px;top:204px;width:246px;height:44.2px;background:#fff;border:1px solid #e6e6e6;"></div>
<div class="a" style="left:604px;top:204px;width:78.3px;height:44.2px;background:#fff;border:2px solid #c6c6c6;"></div>
<div class="t" style="left:620.3px;top:221.86px;font-size:9.5px;color:#333;transform:scaleX(0.9411)">Звичайний</div>
<div class="t" style="left:691.4px;top:221.86px;font-size:9.5px;color:#333;transform:scaleX(0.9463)">Без інтервалів</div>
<div class="t" style="left:764.6px;top:219.46px;font-size:14px;color:#6a7ab0;transform:scaleX(0.9935)">Заголовок</div>
<div class="a" style="left:839.7px;top:204px;width:10.3px;height:44.2px;background:#fff;border-left:1px solid #e6e6e6;"></div>
<div class="a" style="left:840px;top:218px;width:10px;height:1px;background:#e6e6e6;"></div>
<div class="a" style="left:840px;top:233px;width:10px;height:1px;background:#e6e6e6;"></div>
<div class="a" style="left:842.5px;top:211px;width:5px;height:1px;background:#ccc;"></div>
<svg style="left:842.5px;top:224.25px" width="5" height="3.5" viewBox="0 0 5 3.5"><path d="M0.5 0.5 L2.5 2.5 L4.5 0.5" stroke="#555" stroke-width="1" fill="none"/></svg>
<svg style="left:842.5px;top:237.75px" width="5" height="3.5" viewBox="0 0 5 3.5"><path d="M0.5 0.5 L2.5 2.5 L4.5 0.5" stroke="#555" stroke-width="1" fill="none"/></svg>
<div class="a" style="left:842.5px;top:237.5px;width:5px;height:1px;background:#555;"></div>
<svg style="left:883px;top:204.5px" width="12" height="12" viewBox="0 0 12 12"><circle cx="7" cy="5" r="4" fill="none" stroke="#444" stroke-width="1.1"/><path d="M4.2 7.8 L0.8 11.2" stroke="#444" stroke-width="1.3"/></svg>
<div class="t" style="left:863.4px;top:225.96px;font-size:9.5px;color:#333;transform:scaleX(0.8872)">Редагування</div>
<svg style="left:885.3px;top:239.75px" width="5" height="3.5" viewBox="0 0 5 3.5"><path d="M0.5 0.5 L2.5 2.5 L4.5 0.5" stroke="#444" stroke-width="1" fill="none"/></svg>
<svg style="left:938px;top:203px" width="20" height="21" viewBox="0 0 20 21"><path d="M1 1 H11 L15 5 V19 H1 Z" fill="none" stroke="#7494d8" stroke-width="1.1"/><path d="M5 14 C6 10 8 6 8 4 C8 8 10 11 13 12 C9 12 6 13 5 14" fill="none" stroke="#7494d8" stroke-width="0.9"/><rect x="12" y="12" width="7" height="4" rx="2" transform="rotate(-45 15.5 14)" fill="none" stroke="#6a8ae0" stroke-width="1.2"/></svg>
<div class="t" style="left:926.3px;top:227.36px;font-size:9.5px;color:#333;transform:scaleX(0.9211)">Створити</div>
<div class="t" style="left:927.2px;top:239.16px;font-size:9.5px;color:#333;transform:scaleX(0.8130)">PDF-файл</div>
<svg style="left:989px;top:201.5px" width="20" height="21" viewBox="0 0 20 21"><path d="M7 1 L1.5 6.5 L7.5 11" stroke="#555" stroke-width="1.1" fill="none"/><path d="M2 6.5 H11 C15.5 6.5 18.5 9 18.5 12.5 C18.5 15.5 16 18 13 20.5" stroke="#555" stroke-width="1.1" fill="none"/></svg>
<div class="t" style="left:979.7px;top:227.36px;font-size:9.5px;color:#333;transform:scaleX(0.8602)">Скасувати</div>
<div class="t" style="left:988px;top:239.16px;font-size:9.5px;color:#333;transform:scaleX(0.9014)">ввід</div>
<svg style="left:1007.0px;top:242.0px" width="4" height="3.0" viewBox="0 0 4 3.0"><path d="M0.5 0.5 L2.0 2.0 L3.5 0.5" stroke="#444" stroke-width="1" fill="none"/></svg>
<svg style="left:1077.0px;top:256.5px" width="8" height="5.0" viewBox="0 0 8 5.0"><path d="M0.5 0.5 L4.0 4.0 L7.5 0.5" stroke="#555" stroke-width="1" fill="none"/></svg>
<div class="a" style="left:172px;top:267px;width:925px;height:18.5px;background:#f0f0f2;"></div>
<div class="a" style="left:172px;top:285px;width:925px;height:1px;background:#e2e2e4;"></div>
<svg style="left:177.5px;top:275px" width="5" height="5" viewBox="0 0 5 5"><path d="M0.8 0 V4.2 H5" stroke="#444" stroke-width="1.2" fill="none"/></svg>
<div class="a" style="left:172px;top:286px;width:925px;height:323px;background:#efeef1;"></div>
<div class="a" style="left:188px;top:267px;width:1px;height:342px;background:#dedde0;"></div>
<div class="a" style="left:350.5px;top:286px;width:572.5px;height:323px;background:#fff;"></div>
<div class="a" style="left:353.5px;top:273.5px;width:1px;height:5px;background:#777;"></div>
<div class="a" style="left:360.29999999999995px;top:276px;width:1px;height:1px;background:#999;"></div>
<div class="a" style="left:367.09999999999997px;top:273.5px;width:1px;height:5px;background:#777;"></div>
<div class="a" style="left:373.9px;top:276px;width:1px;height:1px;background:#999;"></div>
<div class="a" style="left:380.7px;top:273.5px;width:1px;height:5px;background:#777;"></div>
<div class="a" style="left:387.5px;top:276px;width:1px;height:1px;background:#999;"></div>
<div class="a" style="left:394.29999999999995px;top:273.5px;width:1px;height:5px;background:#777;"></div>
<div class="a" style="left:401.09999999999997px;top:276px;width:1px;height:1px;background:#999;"></div>
<div class="a" style="left:407.9px;top:273.5px;width:1px;height:5px;background:#777;"></div>
<div class="a" style="left:414.7px;top:276px;width:1px;height:1px;background:#999;"></div>
<div class="a" style="left:421.5px;top:273.5px;width:1px;height:5px;background:#777;"></div>
<div class="a" style="left:428.29999999999995px;top:276px;width:1px;height:1px;background:#999;"></div>
<div class="t" style="left:433.09999999999997px;top:272.35px;font-size:8.5px;color:#555;transform:scaleX(0.9505)">1</div>
<div class="a" style="left:441.9px;top:276px;width:1px;height:1px;background:#999;"></div>
<div class="a" style="left:448.7px;top:273.5px;width:1px;height:5px;background:#777;"></div>
<div class="a" style="left:455.5px;top:276px;width:1px;height:1px;background:#999;"></div>
<div class="t" style="left:460.29999999999995px;top:272.35px;font-size:8.5px;color:#555;transform:scaleX(0.9505)">2</div>
<div class="a" style="left:469.09999999999997px;top:276px;width:1px;height:1px;background:#999;"></div>
<div class="a" style="left:475.9px;top:273.5px;width:1px;height:5px;background:#777;"></div>
<div class="a" style="left:482.7px;top:276px;width:1px;height:1px;background:#999;"></div>
<div class="t" style="left:487.5px;top:272.35px;font-size:8.5px;color:#555;transform:scaleX(0.9505)">3</div>
<div class="a" style="left:496.29999999999995px;top:276px;width:1px;height:1px;background:#999;"></div>
<div class="a" style="left:503.09999999999997px;top:273.5px;width:1px;height:5px;background:#777;"></div>
<div class="a" style="left:509.9px;top:276px;width:1px;height:1px;background:#999;"></div>
<div class="t" style="left:514.6999999999999px;top:272.35px;font-size:8.5px;color:#555;transform:scaleX(0.9505)">4</div>
<div class="a" style="left:523.5px;top:276px;width:1px;height:1px;background:#999;"></div>
<div class="a" style="left:530.3px;top:273.5px;width:1px;height:5px;background:#777;"></div>
<div class="a" style="left:537.0999999999999px;top:276px;width:1px;height:1px;background:#999;"></div>
<div class="t" style="left:541.9px;top:272.35px;font-size:8.5px;color:#555;transform:scaleX(0.9505)">5</div>
<div class="a" style="left:550.6999999999999px;top:276px;width:1px;height:1px;background:#999;"></div>
<div class="a" style="left:557.5px;top:273.5px;width:1px;height:5px;background:#777;"></div>
<div class="a" style="left:564.3px;top:276px;width:1px;height:1px;background:#999;"></div>
<div class="t" style="left:569.0999999999999px;top:272.35px;font-size:8.5px;color:#555;transform:scaleX(0.9505)">6</div>
<div class="a" style="left:577.9px;top:276px;width:1px;height:1px;background:#999;"></div>
<div class="a" style="left:584.6999999999999px;top:273.5px;width:1px;height:5px;background:#777;"></div>
<div class="a" style="left:591.5px;top:276px;width:1px;height:1px;background:#999;"></div>
<div class="t" style="left:596.3px;top:272.35px;font-size:8.5px;color:#555;transform:scaleX(0.9505)">7</div>
<div class="a" style="left:605.0999999999999px;top:276px;width:1px;height:1px;background:#999;"></div>
<div class="a" style="left:611.9px;top:273.5px;width:1px;height:5px;background:#777;"></div>
<div class="a" style="left:618.6999999999999px;top:276px;width:1px;height:1px;background:#999;"></div>
<div class="t" style="left:623.5px;top:272.35px;font-size:8.5px;color:#555;transform:scaleX(0.9505)">8</div>
<div class="a" style="left:632.3px;top:276px;width:1px;height:1px;background:#999;"></div>
<div class="a" style="left:639.0999999999999px;top:273.5px;width:1px;height:5px;background:#777;"></div>
<div class="a" style="left:645.9px;top:276px;width:1px;height:1px;background:#999;"></div>
<div class="t" style="left:650.6999999999999px;top:272.35px;font-size:8.5px;color:#555;transform:scaleX(0.9505)">9</div>
<div class="a" style="left:659.5px;top:276px;width:1px;height:1px;background:#999;"></div>
<div class="a" style="left:666.3px;top:273.5px;width:1px;height:5px;background:#777;"></div>
<div class="a" style="left:673.0999999999999px;top:276px;width:1px;height:1px;background:#999;"></div>
<div class="t" style="left:677.9px;top:272.35px;font-size:8.5px;color:#555;transform:scaleX(1.0033)">10</div>
<div class="a" style="left:686.7px;top:276px;width:1px;height:1px;background:#999;"></div>
<div class="a" style="left:693.5px;top:273.5px;width:1px;height:5px;background:#777;"></div>
<div class="a" style="left:700.3px;top:276px;width:1px;height:1px;background:#999;"></div>
<div class="t" style="left:705.0999999999999px;top:272.35px;font-size:8.5px;color:#555;transform:scaleX(1.0761)">11</div>
<div class="a" style="left:713.9px;top:276px;width:1px;height:1px;background:#999;"></div>
<div class="a" style="left:720.7px;top:273.5px;width:1px;height:5px;background:#777;"></div>
<div class="a" style="left:727.5px;top:276px;width:1px;height:1px;background:#999;"></div>
<div class="t" style="left:732.3px;top:272.35px;font-size:8.5px;color:#555;transform:scaleX(1.0033)">12</div>
<div class="a" style="left:741.0999999999999px;top:276px;width:1px;height:1px;background:#999;"></div>
<div class="a" style="left:747.9px;top:273.5px;width:1px;height:5px;background:#777;"></div>
<div class="a" style="left:754.7px;top:276px;width:1px;height:1px;background:#999;"></div>
<div class="t" style="left:759.5px;top:272.35px;font-size:8.5px;color:#555;transform:scaleX(1.0033)">13</div>
<div class="a" style="left:768.3px;top:276px;width:1px;height:1px;background:#999;"></div>
<div class="a" style="left:775.0999999999999px;top:273.5px;width:1px;height:5px;background:#777;"></div>
<div class="a" style="left:781.9px;top:276px;width:1px;height:1px;background:#999;"></div>
<div class="t" style="left:786.7px;top:272.35px;font-size:8.5px;color:#555;transform:scaleX(1.0033)">14</div>
<div class="a" style="left:795.5px;top:276px;width:1px;height:1px;background:#999;"></div>
<div class="a" style="left:802.3px;top:273.5px;width:1px;height:5px;background:#777;"></div>
<div class="a" style="left:809.0999999999999px;top:276px;width:1px;height:1px;background:#999;"></div>
<div class="t" style="left:813.9px;top:272.35px;font-size:8.5px;color:#555;transform:scaleX(1.0033)">15</div>
<div class="a" style="left:822.7px;top:276px;width:1px;height:1px;background:#999;"></div>
<div class="a" style="left:829.5px;top:273.5px;width:1px;height:5px;background:#777;"></div>
<div class="a" style="left:836.3px;top:276px;width:1px;height:1px;background:#999;"></div>
<div class="t" style="left:841.0999999999999px;top:272.35px;font-size:8.5px;color:#555;transform:scaleX(1.0033)">16</div>
<div class="a" style="left:849.9px;top:276px;width:1px;height:1px;background:#999;"></div>
<div class="a" style="left:856.7px;top:273.5px;width:1px;height:5px;background:#777;"></div>
<div class="a" style="left:863.5px;top:276px;width:1px;height:1px;background:#999;"></div>
<div class="a" style="left:401.5px;top:268px;width:6.5px;height:9px;background:#888;"></div>
<svg style="left:403.5px;top:277px" width="11" height="9" viewBox="0 0 11 9"><path d="M0.5 0.5 L5.5 4 H10 V8.5 H0.5 Z M0.5 4 H10" stroke="#777" stroke-width="0.9" fill="#fff"/></svg>
<svg style="left:437.5px;top:269.5px" width="11" height="6" viewBox="0 0 11 6"><path d="M0.5 0.5 H10.5 L5.5 5.5 Z" stroke="#777" stroke-width="0.9" fill="#fff"/></svg>
<div class="a" style="left:872px;top:272px;width:5px;height:5.5px;background:#888;"></div>
<svg style="left:866px;top:277px" width="10" height="9" viewBox="0 0 10 9"><path d="M0.5 4 L5 0.5 L9.5 4 V8.5 H0.5 Z" stroke="#777" stroke-width="0.9" fill="#fff"/></svg>
<div class="a" style="left:1084px;top:286px;width:13px;height:323px;background:#f3f3f4;"></div>
<svg style="left:1086.5px;top:288px" width="8" height="6" viewBox="0 0 8 6"><path d="M0.5 5.5 L4 0.8 L7.5 5.5 Z" fill="#555"/></svg>
<svg style="left:1087px;top:601px" width="8" height="6" viewBox="0 0 8 6"><path d="M0.5 0.5 L4 5.2 L7.5 0.5 Z" fill="#555"/></svg>
<div class="a" style="left:1088.5px;top:515.5px;width:4.5px;height:13.5px;background:#8a8a8a;border-radius:2.5px;"></div>
<div class="a" style="left:172px;top:609px;width:925px;height:16px;background:#f3f2f4;"></div>
<div class="a" style="left:172px;top:609px;width:925px;height:1px;background:#e2e2e4;"></div>
<div class="t" style="left:177.6px;top:613.55px;font-size:8.5px;color:#555;transform:scaleX(0.8887)">Сторінка 16 із 21</div>
<div class="t" style="left:249.8px;top:613.55px;font-size:8.5px;color:#555;transform:scaleX(0.8630)">Кількість слів: 6138</div>
<svg style="left:329px;top:612.5px" width="10" height="10" viewBox="0 0 10 10"><path d="M0.5 0.5 H4.5 V9.5 H0.5 Z M4.5 0.5 H9.5 V5" stroke="#555" stroke-width="0.9" fill="none"/><path d="M6 6.5 L9.5 9.5 M9.5 6.5 L6 9.5" stroke="#555" stroke-width="0.9"/></svg>
<div class="t" style="left:351px;top:613.55px;font-size:8.5px;color:#555;transform:scaleX(0.8757)">українська</div>
<svg style="left:810px;top:612px" width="11" height="11" viewBox="0 0 11 11"><path d="M0.5 3 V0.5 H3 M8 0.5 H10.5 V3 M10.5 8 V10.5 H8 M3 10.5 H0.5 V8" stroke="#555" stroke-width="0.9" fill="none"/><path d="M3 2.5 H6 L8 4.5 V8.5 H3 Z" stroke="#555" stroke-width="0.9" fill="none"/></svg>
<div class="t" style="left:823.4px;top:613.85px;font-size:8.5px;color:#555;transform:scaleX(0.8487)">Сфокусуватися</div>
<svg style="left:892px;top:612px" width="10" height="10" viewBox="0 0 10 10"><path d="M0.5 1 H4.8 V9.5 H0.5 Z M5.2 1 H9.5 V9.5 H5.2 Z M1.5 3 H4 M1.5 5 H4 M6 3 H8.5 M6 5 H8.5" stroke="#666" stroke-width="0.8" fill="none"/></svg>
<div class="a" style="left:912.5px;top:610px;width:28px;height:15px;background:#e4e4e6;"></div>
<svg style="left:922px;top:612px" width="8" height="11" viewBox="0 0 8 11"><rect x="0.5" y="0.5" width="7" height="10" fill="none" stroke="#666" stroke-width="0.8"/><path d="M2 3 H6 M2 5 H6 M2 7 H6" stroke="#666" stroke-width="0.8"/></svg>
<svg style="left:950px;top:612px" width="11" height="11" viewBox="0 0 11 11"><rect x="0.5" y="0.5" width="8.5" height="9" fill="none" stroke="#666" stroke-width="0.8"/><path d="M0.5 2.5 H9" stroke="#666" stroke-width="0.8"/><circle cx="8" cy="8" r="2.8" fill="#555"/></svg>
<div class="a" style="left:973.4px;top:617.5px;width:6px;height:1px;background:#666;"></div>
<div class="a" style="left:984px;top:617.5px;width:70px;height:1px;background:#c8c8c8;"></div>
<div class="a" style="left:1016.8px;top:611px;width:3.5px;height:13px;background:#666;border-radius:1px;"></div>
<div class="a" style="left:1058px;top:617.5px;width:6px;height:1px;background:#666;"></div>
<div class="a" style="left:1060.5px;top:615px;width:1px;height:6px;background:#666;"></div>
<div class="t" style="left:1073px;top:613.85px;font-size:8.5px;color:#555;transform:scaleX(0.8644)">100%</div>
<div class="a" style="left:404.7px;top:296.9px;width:430.70000000000005px;height:1px;background:#505050;"></div>
<div class="a" style="left:404.7px;top:324.4px;width:430.70000000000005px;height:1px;background:#505050;"></div>
<div class="a" style="left:404.7px;top:350.8px;width:430.70000000000005px;height:1px;background:#505050;"></div>
<div class="a" style="left:404.7px;top:378.1px;width:430.70000000000005px;height:1px;background:#505050;"></div>
<div class="a" style="left:404.7px;top:405.6px;width:430.70000000000005px;height:1px;background:#505050;"></div>
<div class="a" style="left:404.7px;top:445.9px;width:430.70000000000005px;height:1px;background:#505050;"></div>
<div class="a" style="left:404.7px;top:473.1px;width:430.70000000000005px;height:1px;background:#505050;"></div>
<div class="a" style="left:404.7px;top:499.2px;width:430.70000000000005px;height:1px;background:#aaa;"></div>
<div class="a" style="left:404.7px;top:526.7px;width:430.70000000000005px;height:1px;background:#505050;"></div>
<div class="a" style="left:404.7px;top:541.0px;width:430.70000000000005px;height:1px;background:#505050;"></div>
<div class="a" style="left:404.7px;top:554.6px;width:430.70000000000005px;height:1px;background:#505050;"></div>
<div class="a" style="left:404.7px;top:568.2px;width:430.70000000000005px;height:1px;background:#505050;"></div>
<div class="a" style="left:404.7px;top:582.1px;width:430.70000000000005px;height:1px;background:#505050;"></div>
<div class="a" style="left:404.7px;top:595.7px;width:430.70000000000005px;height:1px;background:#505050;"></div>
<div class="a" style="left:404.2px;top:296.9px;width:1px;height:312.1px;background:#606060;"></div>
<div class="a" style="left:450.9px;top:296.9px;width:1px;height:312.1px;background:#606060;"></div>
<div class="a" style="left:705.1px;top:296.9px;width:1px;height:312.1px;background:#606060;"></div>
<div class="a" style="left:779.1px;top:296.9px;width:1px;height:312.1px;background:#606060;"></div>
<div class="a" style="left:834.1px;top:296.9px;width:1px;height:312.1px;background:#606060;"></div>
<div class="t" style="left:409.9px;top:298.85px;font-size:11.4px;color:#1e1e1e;font-family:'Liberation Serif',serif;-webkit-text-stroke:0.1px #1e1e1e;">ОК·05<span class="cm">¤</span></div>
<div class="t" style="left:457px;top:298.85px;font-size:11.4px;color:#1e1e1e;font-family:'Liberation Serif',serif;-webkit-text-stroke:0.1px #1e1e1e;">Методика·<u>навчання</u>·предмета·<u>(українська·мова</u>·і·</div>
<div class="t" style="left:457px;top:311.15px;font-size:11.4px;color:#1e1e1e;font-family:'Liberation Serif',serif;-webkit-text-stroke:0.1px #1e1e1e;"><u>література)</u><span class="cm">¤</span></div>
<div class="t" style="left:684.5px;width:120px;text-align:center;top:305.40px;font-size:11.4px;color:#1e1e1e;font-family:'Liberation Serif',serif;-webkit-text-stroke:0.1px #1e1e1e;"><span class="cm">¤</span></div>
<div class="t" style="left:749.5px;width:120px;text-align:center;top:305.40px;font-size:11.4px;color:#1e1e1e;font-family:'Liberation Serif',serif;-webkit-text-stroke:0.1px #1e1e1e;"><span class="cm">¤</span></div>
<div class="t" style="left:835.5px;top:299.69px;font-size:11px;color:#444;font-family:'Liberation Serif',serif;-webkit-text-stroke:0.1px #444;">¤</div>
<div class="t" style="left:409.9px;top:326.35px;font-size:11.4px;color:#1e1e1e;font-family:'Liberation Serif',serif;-webkit-text-stroke:0.1px #1e1e1e;">ОК·05.·</div>
<div class="t" style="left:409.9px;top:338.65px;font-size:11.4px;color:#1e1e1e;font-family:'Liberation Serif',serif;-webkit-text-stroke:0.1px #1e1e1e;">01<span class="cm">¤</span></div>
<div class="t" style="left:457px;top:326.35px;font-size:11.4px;color:#1e1e1e;font-family:'Liberation Serif',serif;-webkit-text-stroke:0.1px #1e1e1e;">Модуль·1.·<u>Методичні·особливості·навчання</u>·</div>
<div class="t" style="left:457px;top:338.65px;font-size:11.4px;color:#1e1e1e;font-family:'Liberation Serif',serif;-webkit-text-stroke:0.1px #1e1e1e;">предмета·<u>(українська·мова)</u><span class="cm">¤</span></div>
<div class="t" style="left:684.5px;width:120px;text-align:center;top:332.35px;font-size:11.4px;color:#1e1e1e;font-family:'Liberation Serif',serif;-webkit-text-stroke:0.1px #1e1e1e;">3<span class="cm">¤</span></div>
<div class="t" style="left:749.5px;width:120px;text-align:center;top:332.35px;font-size:11.4px;color:#1e1e1e;font-family:'Liberation Serif',serif;-webkit-text-stroke:0.1px #1e1e1e;">екзамен<span class="cm">¤</span></div>
<div class="t" style="left:835.5px;top:327.19px;font-size:11px;color:#444;font-family:'Liberation Serif',serif;-webkit-text-stroke:0.1px #444;">¤</div>
<div class="t" style="left:409.9px;top:352.75px;font-size:11.4px;color:#1e1e1e;font-family:'Liberation Serif',serif;-webkit-text-stroke:0.1px #1e1e1e;">ОК·05.·</div>
<div class="t" style="left:409.9px;top:365.05px;font-size:11.4px;color:#1e1e1e;font-family:'Liberation Serif',serif;-webkit-text-stroke:0.1px #1e1e1e;">02<span class="cm">¤</span></div>
<div class="t" style="left:457px;top:352.75px;font-size:11.4px;color:#1e1e1e;font-family:'Liberation Serif',serif;-webkit-text-stroke:0.1px #1e1e1e;">Модуль·2.·<u>Методичні·особливості·навчання</u>·</div>
<div class="t" style="left:457px;top:365.05px;font-size:11.4px;color:#1e1e1e;font-family:'Liberation Serif',serif;-webkit-text-stroke:0.1px #1e1e1e;">предмета·<u>(українська·література)</u><span class="cm">¤</span></div>
<div class="t" style="left:684.5px;width:120px;text-align:center;top:359.20px;font-size:11.4px;color:#1e1e1e;font-family:'Liberation Serif',serif;-webkit-text-stroke:0.1px #1e1e1e;">3<span class="cm">¤</span></div>
<div class="t" style="left:749.5px;width:120px;text-align:center;top:359.20px;font-size:11.4px;color:#1e1e1e;font-family:'Liberation Serif',serif;-webkit-text-stroke:0.1px #1e1e1e;">екзамен<span class="cm">¤</span></div>
<div class="t" style="left:835.5px;top:353.59px;font-size:11px;color:#444;font-family:'Liberation Serif',serif;-webkit-text-stroke:0.1px #444;">¤</div>
<div class="t" style="left:409.9px;top:380.05px;font-size:11.4px;color:#1e1e1e;font-family:'Liberation Serif',serif;-webkit-text-stroke:0.1px #1e1e1e;">ОК·05.·</div>
<div class="t" style="left:409.9px;top:392.35px;font-size:11.4px;color:#1e1e1e;font-family:'Liberation Serif',serif;-webkit-text-stroke:0.1px #1e1e1e;">03<span class="cm">¤</span></div>
<div class="t" style="left:457px;top:380.05px;font-size:11.4px;color:#1e1e1e;font-family:'Liberation Serif',serif;-webkit-text-stroke:0.1px #1e1e1e;">Модуль·3.·<u>Інформаційно-комунікаційні</u>·</div>
<div class="t" style="left:457px;top:392.35px;font-size:11.4px;color:#1e1e1e;font-family:'Liberation Serif',serif;-webkit-text-stroke:0.1px #1e1e1e;"><u>технології·в·мовній·і·літературній·освіті</u><span class="cm">¤</span></div>
<div class="t" style="left:684.5px;width:120px;text-align:center;top:386.60px;font-size:11.4px;color:#1e1e1e;font-family:'Liberation Serif',serif;-webkit-text-stroke:0.1px #1e1e1e;">3<span class="cm">¤</span></div>
<div class="t" style="left:749.5px;width:120px;text-align:center;top:386.60px;font-size:11.4px;color:#1e1e1e;font-family:'Liberation Serif',serif;-webkit-text-stroke:0.1px #1e1e1e;">екзамен<span class="cm">¤</span></div>
<div class="t" style="left:835.5px;top:380.89px;font-size:11px;color:#444;font-family:'Liberation Serif',serif;-webkit-text-stroke:0.1px #444;">¤</div>
<div class="t" style="left:409.9px;top:407.55px;font-size:11.4px;color:#1e1e1e;font-family:'Liberation Serif',serif;-webkit-text-stroke:0.1px #1e1e1e;">ОК·05.·</div>
<div class="t" style="left:409.9px;top:419.85px;font-size:11.4px;color:#1e1e1e;font-family:'Liberation Serif',serif;-webkit-text-stroke:0.1px #1e1e1e;">04<span class="cm">¤</span></div>
<div class="t" style="left:457px;top:407.55px;font-size:11.4px;color:#1e1e1e;font-family:'Liberation Serif',serif;-webkit-text-stroke:0.1px #1e1e1e;">Модуль·4.·<u>Курсова</u>·робота·з·<u>української·мови</u>·та·</div>
<div class="t" style="left:457px;top:419.85px;font-size:11.4px;color:#1e1e1e;font-family:'Liberation Serif',serif;-webkit-text-stroke:0.1px #1e1e1e;"><u>методики·навчання</u>·/·з·<u>української·літератури</u>·та·</div>
<div class="t" style="left:457px;top:432.15px;font-size:11.4px;color:#1e1e1e;font-family:'Liberation Serif',serif;-webkit-text-stroke:0.1px #1e1e1e;"><u>методики·вивчення</u><span class="cm">¤</span></div>
<div class="t" style="left:684.5px;width:120px;text-align:center;top:420.50px;font-size:11.4px;color:#1e1e1e;font-family:'Liberation Serif',serif;-webkit-text-stroke:0.1px #1e1e1e;">3<span class="cm">¤</span></div>
<div class="t" style="left:749.5px;width:120px;text-align:center;top:420.50px;font-size:11.4px;color:#1e1e1e;font-family:'Liberation Serif',serif;-webkit-text-stroke:0.1px #1e1e1e;">залік<span class="cm">¤</span></div>
<div class="t" style="left:835.5px;top:408.39px;font-size:11px;color:#444;font-family:'Liberation Serif',serif;-webkit-text-stroke:0.1px #444;">¤</div>
<div class="t" style="left:409.9px;top:447.85px;font-size:11.4px;color:#1e1e1e;font-family:'Liberation Serif',serif;-webkit-text-stroke:0.1px #1e1e1e;">ОК·05.·</div>
<div class="t" style="left:409.9px;top:460.15px;font-size:11.4px;color:#1e1e1e;font-family:'Liberation Serif',serif;-webkit-text-stroke:0.1px #1e1e1e;">05<span class="cm">¤</span></div>
<div class="t" style="left:457px;top:447.85px;font-size:11.4px;color:#1e1e1e;font-family:'Liberation Serif',serif;-webkit-text-stroke:0.1px #1e1e1e;">Модуль·5.·<u>Навчання·учнів·з·особливими</u>·</div>
<div class="t" style="left:457px;top:460.15px;font-size:11.4px;color:#1e1e1e;font-family:'Liberation Serif',serif;-webkit-text-stroke:0.1px #1e1e1e;"><u>освітніми</u>·потребами<span class="cm">¤</span></div>
<div class="t" style="left:684.5px;width:120px;text-align:center;top:454.25px;font-size:11.4px;color:#1e1e1e;font-family:'Liberation Serif',serif;-webkit-text-stroke:0.1px #1e1e1e;">3<span class="cm">¤</span></div>
<div class="t" style="left:749.5px;width:120px;text-align:center;top:454.25px;font-size:11.4px;color:#1e1e1e;font-family:'Liberation Serif',serif;-webkit-text-stroke:0.1px #1e1e1e;">екзамен<span class="cm">¤</span></div>
<div class="t" style="left:835.5px;top:448.69px;font-size:11px;color:#444;font-family:'Liberation Serif',serif;-webkit-text-stroke:0.1px #444;">¤</div>
<div class="t" style="left:409.9px;top:475.05px;font-size:11.4px;color:#1e1e1e;font-family:'Liberation Serif',serif;-webkit-text-stroke:0.1px #1e1e1e;">ОК·06<span class="cm">¤</span></div>
<div class="t" style="left:457px;top:475.05px;font-size:11.4px;color:#1e1e1e;font-family:'Liberation Serif',serif;-webkit-text-stroke:0.1px #1e1e1e;"><u>Сучасна·українська·мова</u><span class="cm">¤</span></div>
<div class="t" style="left:684.5px;width:120px;text-align:center;top:480.90px;font-size:11.4px;color:#1e1e1e;font-family:'Liberation Serif',serif;-webkit-text-stroke:0.1px #1e1e1e;">31<span class="cm">¤</span></div>
<div class="t" style="left:749.5px;width:120px;text-align:center;top:474.50px;font-size:11.4px;color:#1e1e1e;font-family:'Liberation Serif',serif;-webkit-text-stroke:0.1px #1e1e1e;">екзамен¶</div>
<div class="t" style="left:749.5px;width:120px;text-align:center;top:487.30px;font-size:11.4px;color:#1e1e1e;font-family:'Liberation Serif',serif;-webkit-text-stroke:0.1px #1e1e1e;">залік<span class="cm">¤</span></div>
<div class="t" style="left:835.5px;top:475.89px;font-size:11px;color:#444;font-family:'Liberation Serif',serif;-webkit-text-stroke:0.1px #444;">¤</div>
<div class="t" style="left:409.9px;top:501.15px;font-size:11.4px;color:#1e1e1e;font-family:'Liberation Serif',serif;-webkit-text-stroke:0.1px #1e1e1e;">ОК·07<span class="cm">¤</span></div>
<div class="t" style="left:457px;top:501.15px;font-size:11.4px;color:#1e1e1e;font-family:'Liberation Serif',serif;-webkit-text-stroke:0.1px #1e1e1e;"><u>Історія·української·літератури</u><span class="cm">¤</span></div>
<div class="t" style="left:684.5px;width:120px;text-align:center;top:507.70px;font-size:11.4px;color:#1e1e1e;font-family:'Liberation Serif',serif;-webkit-text-stroke:0.1px #1e1e1e;">28<span class="cm">¤</span></div>
<div class="t" style="left:749.5px;width:120px;text-align:center;top:501.30px;font-size:11.4px;color:#1e1e1e;font-family:'Liberation Serif',serif;-webkit-text-stroke:0.1px #1e1e1e;">екзамен¶</div>
<div class="t" style="left:749.5px;width:120px;text-align:center;top:514.10px;font-size:11.4px;color:#1e1e1e;font-family:'Liberation Serif',serif;-webkit-text-stroke:0.1px #1e1e1e;">залік<span class="cm">¤</span></div>
<div class="t" style="left:835.5px;top:501.99px;font-size:11px;color:#444;font-family:'Liberation Serif',serif;-webkit-text-stroke:0.1px #444;">¤</div>
<div class="t" style="left:409.9px;top:528.65px;font-size:11.4px;color:#1e1e1e;font-family:'Liberation Serif',serif;-webkit-text-stroke:0.1px #1e1e1e;">ОК·08<span class="cm">¤</span></div>
<div class="t" style="left:457px;top:528.65px;font-size:11.4px;color:#1e1e1e;font-family:'Liberation Serif',serif;-webkit-text-stroke:0.1px #1e1e1e;"><u>Загальна·психологія</u><span class="cm">¤</span></div>
<div class="t" style="left:684.5px;width:120px;text-align:center;top:528.60px;font-size:11.4px;color:#1e1e1e;font-family:'Liberation Serif',serif;-webkit-text-stroke:0.1px #1e1e1e;">3<span class="cm">¤</span></div>
<div class="t" style="left:749.5px;width:120px;text-align:center;top:528.60px;font-size:11.4px;color:#1e1e1e;font-family:'Liberation Serif',serif;-webkit-text-stroke:0.1px #1e1e1e;">екзамен<span class="cm">¤</span></div>
<div class="t" style="left:835.5px;top:529.49px;font-size:11px;color:#444;font-family:'Liberation Serif',serif;-webkit-text-stroke:0.1px #444;">¤</div>
<div class="t" style="left:409.9px;top:542.95px;font-size:11.4px;color:#1e1e1e;font-family:'Liberation Serif',serif;-webkit-text-stroke:0.1px #1e1e1e;">ОК·09<span class="cm">¤</span></div>
<div class="t" style="left:457px;top:542.95px;font-size:11.4px;color:#1e1e1e;font-family:'Liberation Serif',serif;-webkit-text-stroke:0.1px #1e1e1e;"><u>Вступ·до·мовознавства</u><span class="cm">¤</span></div>
<div class="t" style="left:684.5px;width:120px;text-align:center;top:542.55px;font-size:11.4px;color:#1e1e1e;font-family:'Liberation Serif',serif;-webkit-text-stroke:0.1px #1e1e1e;">3<span class="cm">¤</span></div>
<div class="t" style="left:749.5px;width:120px;text-align:center;top:542.55px;font-size:11.4px;color:#1e1e1e;font-family:'Liberation Serif',serif;-webkit-text-stroke:0.1px #1e1e1e;">залік<span class="cm">¤</span></div>
<div class="t" style="left:835.5px;top:543.79px;font-size:11px;color:#444;font-family:'Liberation Serif',serif;-webkit-text-stroke:0.1px #444;">¤</div>
<div class="t" style="left:409.9px;top:556.55px;font-size:11.4px;color:#1e1e1e;font-family:'Liberation Serif',serif;-webkit-text-stroke:0.1px #1e1e1e;">ОК·10<span class="cm">¤</span></div>
<div class="t" style="left:457px;top:556.55px;font-size:11.4px;color:#1e1e1e;font-family:'Liberation Serif',serif;-webkit-text-stroke:0.1px #1e1e1e;"><u>Вступ·до·літературознавства</u><span class="cm">¤</span></div>
<div class="t" style="left:684.5px;width:120px;text-align:center;top:556.15px;font-size:11.4px;color:#1e1e1e;font-family:'Liberation Serif',serif;-webkit-text-stroke:0.1px #1e1e1e;">3<span class="cm">¤</span></div>
<div class="t" style="left:749.5px;width:120px;text-align:center;top:556.15px;font-size:11.4px;color:#1e1e1e;font-family:'Liberation Serif',serif;-webkit-text-stroke:0.1px #1e1e1e;">залік<span class="cm">¤</span></div>
<div class="t" style="left:835.5px;top:557.39px;font-size:11px;color:#444;font-family:'Liberation Serif',serif;-webkit-text-stroke:0.1px #444;">¤</div>
<div class="t" style="left:409.9px;top:570.15px;font-size:11.4px;color:#1e1e1e;font-family:'Liberation Serif',serif;-webkit-text-stroke:0.1px #1e1e1e;">ОК·11<span class="cm">¤</span></div>
<div class="t" style="left:457px;top:570.15px;font-size:11.4px;color:#1e1e1e;font-family:'Liberation Serif',serif;-webkit-text-stroke:0.1px #1e1e1e;"><u>Основи·наукових·досліджень</u><span class="cm">¤</span></div>
<div class="t" style="left:684.5px;width:120px;text-align:center;top:569.90px;font-size:11.4px;color:#1e1e1e;font-family:'Liberation Serif',serif;-webkit-text-stroke:0.1px #1e1e1e;">3<span class="cm">¤</span></div>
<div class="t" style="left:749.5px;width:120px;text-align:center;top:569.90px;font-size:11.4px;color:#1e1e1e;font-family:'Liberation Serif',serif;-webkit-text-stroke:0.1px #1e1e1e;">екзамен<span class="cm">¤</span></div>
<div class="t" style="left:835.5px;top:570.99px;font-size:11px;color:#444;font-family:'Liberation Serif',serif;-webkit-text-stroke:0.1px #444;">¤</div>
<div class="t" style="left:409.9px;top:584.05px;font-size:11.4px;color:#1e1e1e;font-family:'Liberation Serif',serif;-webkit-text-stroke:0.1px #1e1e1e;">ОК·12<span class="cm">¤</span></div>
<div class="t" style="left:457px;top:584.05px;font-size:11.4px;color:#1e1e1e;font-family:'Liberation Serif',serif;-webkit-text-stroke:0.1px #1e1e1e;"><u>Педагогіка</u><span class="cm">¤</span></div>
<div class="t" style="left:684.5px;width:120px;text-align:center;top:583.65px;font-size:11.4px;color:#1e1e1e;font-family:'Liberation Serif',serif;-webkit-text-stroke:0.1px #1e1e1e;">6<span class="cm">¤</span></div>
<div class="t" style="left:749.5px;width:120px;text-align:center;top:583.65px;font-size:11.4px;color:#1e1e1e;font-family:'Liberation Serif',serif;-webkit-text-stroke:0.1px #1e1e1e;">екзамен<span class="cm">¤</span></div>
<div class="t" style="left:835.5px;top:584.89px;font-size:11px;color:#444;font-family:'Liberation Serif',serif;-webkit-text-stroke:0.1px #444;">¤</div>
<div class="t" style="left:409.9px;top:597.65px;font-size:11.4px;color:#1e1e1e;font-family:'Liberation Serif',serif;-webkit-text-stroke:0.1px #1e1e1e;">ОК·13<span class="cm">¤</span></div>
<div class="t" style="left:457px;top:597.65px;font-size:11.4px;color:#1e1e1e;font-family:'Liberation Serif',serif;-webkit-text-stroke:0.1px #1e1e1e;"><u>Український·фольклор</u><span class="cm">¤</span></div>
<div class="t" style="left:684.5px;width:120px;text-align:center;top:598.35px;font-size:11.4px;color:#1e1e1e;font-family:'Liberation Serif',serif;-webkit-text-stroke:0.1px #1e1e1e;">3<span class="cm">¤</span></div>
<div class="t" style="left:749.5px;width:120px;text-align:center;top:598.35px;font-size:11.4px;color:#1e1e1e;font-family:'Liberation Serif',serif;-webkit-text-stroke:0.1px #1e1e1e;">залік<span class="cm">¤</span></div>
<div class="t" style="left:835.5px;top:598.49px;font-size:11px;color:#444;font-family:'Liberation Serif',serif;-webkit-text-stroke:0.1px #444;">¤</div>
<svg style="left:604.5px;top:484.5px" width="8" height="12" viewBox="0 0 8 12"><path d="M0.5 0.5 V10 L3 7.8 L4.8 11.5 L6.2 10.8 L4.5 7.2 L7.5 7.2 Z" fill="#fff" stroke="#555" stroke-width="0.8"/></svg>

<!-- BOTTOM -->
<div class="a" style="left:0;top:625px;width:1280px;height:57px;background:#000"></div>
<div class="a" style="left:0px;top:680px;width:1280px;height:2px;background:#c4c4c6;"></div>
<div class="a" style="left:8px;top:571.5px;width:30px;height:30px;background:#25282b;border-radius:50%;"></div>
<svg style="left:15px;top:578px" width="16" height="18" viewBox="0 0 16 18"><path d="M1.5 14 V11 L10.5 2 C11.3 1.2 12.3 1.2 13 2 L13.8 2.8 C14.6 3.6 14.6 4.6 13.8 5.3 L4.8 14.3 Z" stroke="#2bd17e" stroke-width="1.4" fill="none"/><path d="M9 3.5 L12.5 7" stroke="#2bd17e" stroke-width="1.3"/><path d="M1 16.8 H15" stroke="#2bd17e" stroke-width="1.5"/></svg>
<svg style="left:31px;top:634.5px" width="14" height="24" viewBox="0 0 14 24"><rect x="3.5" y="0.8" width="7" height="13" rx="3.5" stroke="#eee" stroke-width="1.5" fill="none"/><path d="M0.8 9 C0.8 13.5 3.5 16.5 7 16.5 C10.5 16.5 13.2 13.5 13.2 9 M7 16.5 V22.5 M3 22.5 H11" stroke="#eee" stroke-width="1.5" fill="none"/></svg>
<svg style="left:64px;top:644.0px" width="8" height="5" viewBox="0 0 8 5"><path d="M0.8 4.2 L4 1 L7.2 4.2" stroke="#e8e8e8" stroke-width="1.4" fill="none"/></svg>
<div class="t" style="left:26.2px;top:663.48px;font-size:11.3px;color:#f0f0f0;font-weight:bold;transform:scaleX(0.9343)">Звук</div>
<svg style="left:114px;top:639.5px" width="24" height="15" viewBox="0 0 24 15"><rect x="0.8" y="0.8" width="15" height="13.4" rx="3" stroke="#eee" stroke-width="1.5" fill="none"/><path d="M16 5.5 L23 1.5 V13.5 L16 9.5" stroke="#eee" stroke-width="1.5" fill="none"/></svg>
<svg style="left:157px;top:644.0px" width="8" height="5" viewBox="0 0 8 5"><path d="M0.8 4.2 L4 1 L7.2 4.2" stroke="#e8e8e8" stroke-width="1.4" fill="none"/></svg>
<div class="t" style="left:110.6px;top:663.48px;font-size:11.3px;color:#f0f0f0;font-weight:bold;transform:scaleX(0.8853)">Видео</div>
<svg style="left:246px;top:637px" width="19" height="18" viewBox="0 0 19 18"><circle cx="5.5" cy="4" r="2.8" stroke="#eee" stroke-width="1.4" fill="none"/><circle cx="12.5" cy="7" r="2.8" stroke="#eee" stroke-width="1.4" fill="none"/><path d="M7.5 16.5 H2.5 C1.5 16.5 0.8 15.8 0.8 14.8 V12.5 C0.8 10.5 2.3 9.5 4.5 9.5 H6.5" stroke="#eee" stroke-width="1.4" fill="none"/><rect x="7.5" y="11" width="10" height="5.8" rx="2.9" stroke="#eee" stroke-width="1.4" fill="none"/></svg>
<div class="t" style="left:270.5px;top:639.62px;font-size:10px;color:#a8a8a8;transform:scaleX(0.9348)">8</div>
<svg style="left:301px;top:644.0px" width="8" height="5" viewBox="0 0 8 5"><path d="M0.8 4.2 L4 1 L7.2 4.2" stroke="#e8e8e8" stroke-width="1.4" fill="none"/></svg>
<div class="t" style="left:227px;top:663.48px;font-size:11.3px;color:#f0f0f0;font-weight:bold;transform:scaleX(0.9386)">Участники</div>
<svg style="left:347px;top:634.5px" width="23" height="23" viewBox="0 0 23 23"><path d="M6 4 C6 2 7.5 0.8 9.5 0.8 H18.5 C20.5 0.8 22 2 22 4 V10 C22 12 20.5 13 18.5 13" stroke="#eee" stroke-width="1.4" fill="none"/><path d="M0.8 9 C0.8 7 2.3 5.5 4.3 5.5 H14.5 C16.5 5.5 18 7 18 9 V15 C18 17 16.5 18.5 14.5 18.5 H6 L2.5 22 V18 C1.5 17.5 0.8 16.5 0.8 15 Z" stroke="#eee" stroke-width="1.4" fill="#000"/><circle cx="5.5" cy="12" r="1.1" fill="#eee"/><circle cx="9.4" cy="12" r="1.1" fill="#eee"/><circle cx="13.3" cy="12" r="1.1" fill="#eee"/></svg>
<svg style="left:386px;top:644.0px" width="8" height="5" viewBox="0 0 8 5"><path d="M0.8 4.2 L4 1 L7.2 4.2" stroke="#e8e8e8" stroke-width="1.4" fill="none"/></svg>
<div class="t" style="left:349.4px;top:663.48px;font-size:11.3px;color:#f0f0f0;font-weight:bold;transform:scaleX(0.9157)">Чат</div>
<svg style="left:436px;top:638px" width="23" height="18" viewBox="0 0 23 18"><path d="M11.5 17 C5 12.5 0.8 9 0.8 5.2 C0.8 2.6 2.8 0.8 5.5 0.8 C8 0.8 10 2.2 11.5 4.3 C13 2.2 15 0.8 17.5 0.8 C20.2 0.8 22.2 2.6 22.2 5.2 C22.2 9 18 12.5 11.5 17 Z" stroke="#eee" stroke-width="1.5" fill="none"/></svg>
<svg style="left:479.5px;top:644.0px" width="8" height="5" viewBox="0 0 8 5"><path d="M0.8 4.2 L4 1 L7.2 4.2" stroke="#e8e8e8" stroke-width="1.4" fill="none"/></svg>
<div class="t" style="left:409.6px;top:663.48px;font-size:11.3px;color:#f0f0f0;font-weight:bold;transform:scaleX(0.9210)">Отреагировать</div>
<svg style="left:528.5px;top:634px" width="18" height="24" viewBox="0 0 18 24"><path d="M4 12 V4 C4 2.9 4.8 2.2 5.7 2.2 C6.6 2.2 7.3 2.9 7.3 4 V10.5 V2.5 C7.3 1.4 8.1 0.7 9 0.7 C9.9 0.7 10.6 1.4 10.6 2.5 V10.5 V3.5 C10.6 2.4 11.4 1.7 12.3 1.7 C13.2 1.7 13.9 2.4 13.9 3.5 V11 V6 C13.9 5 14.6 4.4 15.4 4.4 C16.3 4.4 17 5 17 6 V15 C17 20 14 23 9.5 23 C6 23 4 21 2.5 18.5 L0.8 15 C0.3 14 0.8 13 1.8 12.8 C2.7 12.6 3.4 13.2 4 14 Z" stroke="#eee" stroke-width="1.3" fill="none"/></svg>
<svg style="left:565.5px;top:644.0px" width="8" height="5" viewBox="0 0 8 5"><path d="M0.8 4.2 L4 1 L7.2 4.2" stroke="#e8e8e8" stroke-width="1.4" fill="none"/></svg>
<div class="t" style="left:503px;top:663.48px;font-size:11.3px;color:#f0f0f0;font-weight:bold;transform:scaleX(0.9284)">Поднять руку</div>
<div class="a" style="left:616px;top:637px;width:23px;height:18.3px;background:#1fd46c;border-radius:3px;"></div>
<svg style="left:621.5px;top:640px" width="12" height="12" viewBox="0 0 12 12"><path d="M6 11.5 V2 M1.5 6 L6 1.5 L10.5 6" stroke="#000" stroke-width="2.2" fill="none"/></svg>
<svg style="left:658.3px;top:644.0px" width="8" height="5" viewBox="0 0 8 5"><path d="M0.8 4.2 L4 1 L7.2 4.2" stroke="#e8e8e8" stroke-width="1.4" fill="none"/></svg>
<div class="t" style="left:597px;top:663.48px;font-size:11.3px;color:#f0f0f0;font-weight:bold;transform:scaleX(0.9069)">Поделиться</div>
<svg style="left:745px;top:636px" width="18" height="21" viewBox="0 0 18 21"><path d="M9 0.8 L17 3.5 V9.5 C17 14.5 13.5 18.5 9 20.2 C4.5 18.5 1 14.5 1 9.5 V3.5 Z" stroke="#eee" stroke-width="1.5" fill="none"/><path d="M9 3 V10.5 H3.2 V4.8 Z" fill="#eee"/><path d="M9 10.5 H14.8 C14.5 14 12.2 16.8 9 18 Z" fill="#eee"/></svg>
<div class="t" style="left:681.9px;top:663.48px;font-size:11.3px;color:#f0f0f0;font-weight:bold;transform:scaleX(0.9413)">Инструменты организатора</div>
<svg style="left:867px;top:635px" width="24" height="23" viewBox="0 0 24 23"><defs><linearGradient id="sg" x1="0" y1="0" x2="1" y2="1"><stop offset="0" stop-color="#e6f4fb"/><stop offset="1" stop-color="#9fd0ea"/></linearGradient></defs><path d="M10 3 Q12.5 9.5 19 12.5 Q12.5 15.5 10 22 Q7.5 15.5 1 12.5 Q7.5 9.5 10 3 Z" fill="url(#sg)"/><path d="M19.5 0.5 Q20.3 2.7 22.5 3.5 Q20.3 4.3 19.5 6.5 Q18.7 4.3 16.5 3.5 Q18.7 2.7 19.5 0.5 Z" fill="#e6f4fb"/></svg>
<div class="t" style="left:844px;top:663.48px;font-size:11.3px;color:#f0f0f0;font-weight:bold;transform:scaleX(0.9415)">AI Companion</div>
<div class="a" style="left:976px;top:635.5px;width:22.5px;height:20.5px;background:none;border:1.8px solid #ddd;border-radius:5px;"></div>
<div class="a" style="left:1000.5px;top:635.5px;width:22.5px;height:20.5px;background:none;border:1.8px solid #ddd;border-radius:5px;"></div>
<div class="a" style="left:983.5px;top:642px;width:2.8px;height:8px;background:#eee;border-radius:1px;"></div>
<div class="a" style="left:989px;top:642px;width:2.8px;height:8px;background:#eee;border-radius:1px;"></div>
<div class="a" style="left:1007.5px;top:642px;width:8.5px;height:8.5px;background:#eee;border-radius:2px;"></div>
<div class="t" style="left:932px;top:663.48px;font-size:11.3px;color:#a8a8a8;font-weight:bold;transform:scaleX(0.9441)">Пауза/остановить запись</div>
<svg style="left:1111px;top:636px" width="23" height="23" viewBox="0 0 23 23"><circle cx="11.5" cy="11.5" r="10.7" stroke="#eee" stroke-width="1.5" fill="none"/><circle cx="6.8" cy="11.5" r="1.5" fill="#eee"/><circle cx="11.5" cy="11.5" r="1.5" fill="#eee"/><circle cx="16.2" cy="11.5" r="1.5" fill="#eee"/></svg>
<div class="t" style="left:1081.4px;top:663.48px;font-size:11.3px;color:#f0f0f0;font-weight:bold;transform:scaleX(0.9468)">Дополнительно</div>
<svg style="left:1221.5px;top:635px" width="24" height="22" viewBox="0 0 24 22"><path d="M6.5 1 H17.5 L23 11 L17.5 21 H6.5 L1 11 Z" stroke="#e0243a" stroke-width="1.8" fill="none"/><path d="M8.5 7 L15.5 14 M15.5 7 L8.5 14" stroke="#fff" stroke-width="2.2"/></svg>
<div class="t" style="left:1201.7px;top:663.48px;font-size:11.3px;color:#f0f0f0;font-weight:bold;transform:scaleX(0.9408)">Завершение</div>


</body></html>
